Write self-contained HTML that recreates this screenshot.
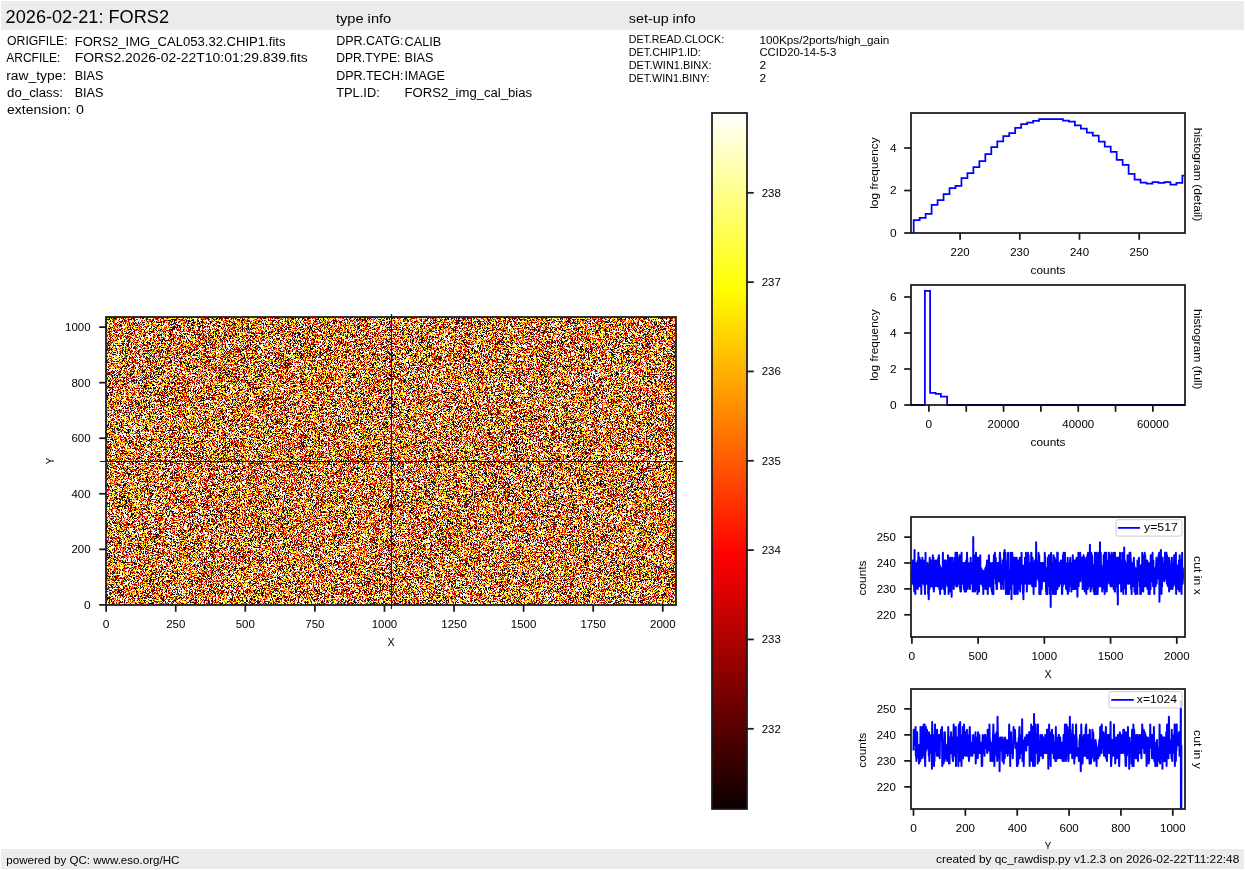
<!DOCTYPE html>
<html><head><meta charset="utf-8"><title>FORS2 raw display</title>
<style>
html,body{margin:0;padding:0;background:#ffffff;}
body{width:1245px;height:870px;position:relative;overflow:hidden;font-family:"Liberation Sans",sans-serif;}
#img{position:absolute;left:106px;top:317px;width:570px;height:288px;background:rgb(199,129,70);image-rendering:pixelated;}
svg text{font-family:"Liberation Sans",sans-serif;}
</style></head><body>
<canvas id="img" width="570" height="288"></canvas>
<svg width="1245" height="870" viewBox="0 0 1245 870" style="position:absolute;left:0;top:0">
<defs><linearGradient id="hot" x1="0" y1="1" x2="0" y2="0"><stop offset="0" stop-color="rgb(11,0,0)"/><stop offset="0.365079" stop-color="rgb(255,0,0)"/><stop offset="0.746032" stop-color="rgb(255,255,0)"/><stop offset="1" stop-color="rgb(255,255,255)"/></linearGradient><clipPath id="cx"><rect x="911" y="517" width="274" height="120"/></clipPath><clipPath id="cy"><rect x="911" y="689" width="274" height="120"/></clipPath><clipPath id="hd"><rect x="911" y="113" width="274" height="120"/></clipPath></defs>
<rect x="1" y="1" width="1243" height="29" fill="#ebebeb"/>
<text x="5.60" y="23.00" font-size="17.50" text-anchor="start" textLength="163.45" lengthAdjust="spacingAndGlyphs" fill="#000000">2026-02-21: FORS2</text>
<text x="335.90" y="22.70" font-size="13.12" text-anchor="start" textLength="55.34" lengthAdjust="spacingAndGlyphs" fill="#000000">type info</text>
<text x="628.80" y="22.70" font-size="13.12" text-anchor="start" textLength="66.89" lengthAdjust="spacingAndGlyphs" fill="#000000">set-up info</text>
<text x="7.10" y="44.90" font-size="13.12" text-anchor="start" textLength="60.49" lengthAdjust="spacingAndGlyphs" fill="#000000">ORIGFILE:</text>
<text x="74.70" y="45.90" font-size="13.12" text-anchor="start" textLength="210.78" lengthAdjust="spacingAndGlyphs" fill="#000000">FORS2_IMG_CAL053.32.CHIP1.fits</text>
<text x="6.20" y="61.90" font-size="13.12" text-anchor="start" textLength="54.08" lengthAdjust="spacingAndGlyphs" fill="#000000">ARCFILE:</text>
<text x="74.70" y="61.90" font-size="13.12" text-anchor="start" textLength="233.10" lengthAdjust="spacingAndGlyphs" fill="#000000">FORS2.2026-02-22T10:01:29.839.fits</text>
<text x="6.20" y="79.90" font-size="13.12" text-anchor="start" textLength="60.06" lengthAdjust="spacingAndGlyphs" fill="#000000">raw_type:</text>
<text x="74.70" y="79.90" font-size="13.12" text-anchor="start" textLength="28.75" lengthAdjust="spacingAndGlyphs" fill="#000000">BIAS</text>
<text x="7.10" y="97.00" font-size="13.12" text-anchor="start" textLength="55.82" lengthAdjust="spacingAndGlyphs" fill="#000000">do_class:</text>
<text x="74.70" y="97.00" font-size="13.12" text-anchor="start" textLength="28.75" lengthAdjust="spacingAndGlyphs" fill="#000000">BIAS</text>
<text x="7.10" y="113.70" font-size="13.12" text-anchor="start" textLength="63.72" lengthAdjust="spacingAndGlyphs" fill="#000000">extension:</text>
<text x="75.90" y="113.70" font-size="13.12" text-anchor="start" textLength="7.95" lengthAdjust="spacingAndGlyphs" fill="#000000">0</text>
<text x="336.15" y="44.90" font-size="13.12" text-anchor="start" textLength="67.22" lengthAdjust="spacingAndGlyphs" fill="#000000">DPR.CATG:</text>
<text x="404.60" y="45.90" font-size="13.12" text-anchor="start" textLength="36.50" lengthAdjust="spacingAndGlyphs" fill="#000000">CALIB</text>
<text x="336.15" y="61.90" font-size="13.12" text-anchor="start" textLength="64.30" lengthAdjust="spacingAndGlyphs" fill="#000000">DPR.TYPE:</text>
<text x="404.60" y="61.90" font-size="13.12" text-anchor="start" textLength="28.75" lengthAdjust="spacingAndGlyphs" fill="#000000">BIAS</text>
<text x="336.15" y="79.90" font-size="13.12" text-anchor="start" textLength="67.25" lengthAdjust="spacingAndGlyphs" fill="#000000">DPR.TECH:</text>
<text x="404.60" y="79.90" font-size="13.12" text-anchor="start" textLength="40.39" lengthAdjust="spacingAndGlyphs" fill="#000000">IMAGE</text>
<text x="336.15" y="97.00" font-size="13.12" text-anchor="start" textLength="43.63" lengthAdjust="spacingAndGlyphs" fill="#000000">TPL.ID:</text>
<text x="404.60" y="97.00" font-size="13.12" text-anchor="start" textLength="127.52" lengthAdjust="spacingAndGlyphs" fill="#000000">FORS2_img_cal_bias</text>
<text x="628.70" y="43.20" font-size="10.94" text-anchor="start" textLength="95.43" lengthAdjust="spacingAndGlyphs" fill="#000000">DET.READ.CLOCK:</text>
<text x="759.45" y="44.10" font-size="10.94" text-anchor="start" textLength="129.84" lengthAdjust="spacingAndGlyphs" fill="#000000">100Kps/2ports/high_gain</text>
<text x="628.70" y="55.80" font-size="10.94" text-anchor="start" textLength="72.19" lengthAdjust="spacingAndGlyphs" fill="#000000">DET.CHIP1.ID:</text>
<text x="759.45" y="55.80" font-size="10.94" text-anchor="start" textLength="76.83" lengthAdjust="spacingAndGlyphs" fill="#000000">CCID20-14-5-3</text>
<text x="628.70" y="68.70" font-size="10.94" text-anchor="start" textLength="82.96" lengthAdjust="spacingAndGlyphs" fill="#000000">DET.WIN1.BINX:</text>
<text x="759.45" y="68.70" font-size="10.94" text-anchor="start" textLength="6.64" lengthAdjust="spacingAndGlyphs" fill="#000000">2</text>
<text x="628.70" y="81.60" font-size="10.94" text-anchor="start" textLength="80.80" lengthAdjust="spacingAndGlyphs" fill="#000000">DET.WIN1.BINY:</text>
<text x="759.45" y="81.60" font-size="10.94" text-anchor="start" textLength="6.64" lengthAdjust="spacingAndGlyphs" fill="#000000">2</text>
<line x1="391.50" y1="314.00" x2="391.50" y2="609.00" stroke="#0000ff" stroke-width="1.15" stroke-linecap="butt"/>
<line x1="100.00" y1="461.50" x2="683.00" y2="461.50" stroke="#0000ff" stroke-width="1.15" stroke-linecap="butt"/>
<rect x="106.00" y="317.00" width="570.00" height="288.00" fill="none" stroke="#1a1a1a" stroke-width="1.75" stroke-linejoin="miter"/>
<line x1="106.14" y1="605.00" x2="106.14" y2="611.80" stroke="#1a1a1a" stroke-width="1.75" stroke-linecap="butt"/>
<text x="106.14" y="627.70" font-size="10.94" text-anchor="middle" textLength="6.64" lengthAdjust="spacingAndGlyphs" fill="#000000">0</text>
<line x1="175.72" y1="605.00" x2="175.72" y2="611.80" stroke="#1a1a1a" stroke-width="1.75" stroke-linecap="butt"/>
<text x="175.72" y="627.70" font-size="10.94" text-anchor="middle" textLength="19.12" lengthAdjust="spacingAndGlyphs" fill="#000000">250</text>
<line x1="245.30" y1="605.00" x2="245.30" y2="611.80" stroke="#1a1a1a" stroke-width="1.75" stroke-linecap="butt"/>
<text x="245.30" y="627.70" font-size="10.94" text-anchor="middle" textLength="19.12" lengthAdjust="spacingAndGlyphs" fill="#000000">500</text>
<line x1="314.88" y1="605.00" x2="314.88" y2="611.80" stroke="#1a1a1a" stroke-width="1.75" stroke-linecap="butt"/>
<text x="314.88" y="627.70" font-size="10.94" text-anchor="middle" textLength="19.12" lengthAdjust="spacingAndGlyphs" fill="#000000">750</text>
<line x1="384.46" y1="605.00" x2="384.46" y2="611.80" stroke="#1a1a1a" stroke-width="1.75" stroke-linecap="butt"/>
<text x="384.46" y="627.70" font-size="10.94" text-anchor="middle" textLength="25.50" lengthAdjust="spacingAndGlyphs" fill="#000000">1000</text>
<line x1="454.04" y1="605.00" x2="454.04" y2="611.80" stroke="#1a1a1a" stroke-width="1.75" stroke-linecap="butt"/>
<text x="454.04" y="627.70" font-size="10.94" text-anchor="middle" textLength="25.50" lengthAdjust="spacingAndGlyphs" fill="#000000">1250</text>
<line x1="523.62" y1="605.00" x2="523.62" y2="611.80" stroke="#1a1a1a" stroke-width="1.75" stroke-linecap="butt"/>
<text x="523.62" y="627.70" font-size="10.94" text-anchor="middle" textLength="25.50" lengthAdjust="spacingAndGlyphs" fill="#000000">1500</text>
<line x1="593.20" y1="605.00" x2="593.20" y2="611.80" stroke="#1a1a1a" stroke-width="1.75" stroke-linecap="butt"/>
<text x="593.20" y="627.70" font-size="10.94" text-anchor="middle" textLength="25.50" lengthAdjust="spacingAndGlyphs" fill="#000000">1750</text>
<line x1="662.78" y1="605.00" x2="662.78" y2="611.80" stroke="#1a1a1a" stroke-width="1.75" stroke-linecap="butt"/>
<text x="662.78" y="627.70" font-size="10.94" text-anchor="middle" textLength="25.50" lengthAdjust="spacingAndGlyphs" fill="#000000">2000</text>
<line x1="99.20" y1="604.90" x2="106.00" y2="604.90" stroke="#1a1a1a" stroke-width="1.75" stroke-linecap="butt"/>
<text x="90.60" y="608.80" font-size="10.94" text-anchor="end" textLength="6.64" lengthAdjust="spacingAndGlyphs" fill="#000000">0</text>
<line x1="99.20" y1="549.34" x2="106.00" y2="549.34" stroke="#1a1a1a" stroke-width="1.75" stroke-linecap="butt"/>
<text x="90.60" y="553.24" font-size="10.94" text-anchor="end" textLength="19.12" lengthAdjust="spacingAndGlyphs" fill="#000000">200</text>
<line x1="99.20" y1="493.78" x2="106.00" y2="493.78" stroke="#1a1a1a" stroke-width="1.75" stroke-linecap="butt"/>
<text x="90.60" y="497.68" font-size="10.94" text-anchor="end" textLength="19.12" lengthAdjust="spacingAndGlyphs" fill="#000000">400</text>
<line x1="99.20" y1="438.22" x2="106.00" y2="438.22" stroke="#1a1a1a" stroke-width="1.75" stroke-linecap="butt"/>
<text x="90.60" y="442.12" font-size="10.94" text-anchor="end" textLength="19.12" lengthAdjust="spacingAndGlyphs" fill="#000000">600</text>
<line x1="99.20" y1="382.66" x2="106.00" y2="382.66" stroke="#1a1a1a" stroke-width="1.75" stroke-linecap="butt"/>
<text x="90.60" y="386.56" font-size="10.94" text-anchor="end" textLength="19.12" lengthAdjust="spacingAndGlyphs" fill="#000000">800</text>
<line x1="99.20" y1="327.10" x2="106.00" y2="327.10" stroke="#1a1a1a" stroke-width="1.75" stroke-linecap="butt"/>
<text x="90.60" y="331.00" font-size="10.94" text-anchor="end" textLength="25.50" lengthAdjust="spacingAndGlyphs" fill="#000000">1000</text>
<text x="391.00" y="645.70" font-size="10.94" text-anchor="middle" textLength="7.15" lengthAdjust="spacingAndGlyphs" fill="#000000">X</text>
<text x="54.00" y="461.00" font-size="10.94" text-anchor="middle" textLength="6.38" lengthAdjust="spacingAndGlyphs" fill="#000000" transform="rotate(-90 54.00 461.00)">Y</text>
<rect x="712" y="113" width="35" height="696" fill="url(#hot)"/>
<rect x="712.00" y="113.00" width="35.00" height="696.00" fill="none" stroke="#1a1a1a" stroke-width="1.75" stroke-linejoin="miter"/>
<line x1="747.00" y1="192.80" x2="753.80" y2="192.80" stroke="#1a1a1a" stroke-width="1.75" stroke-linecap="butt"/>
<text x="761.75" y="196.70" font-size="10.94" text-anchor="start" textLength="19.12" lengthAdjust="spacingAndGlyphs" fill="#000000">238</text>
<line x1="747.00" y1="282.13" x2="753.80" y2="282.13" stroke="#1a1a1a" stroke-width="1.75" stroke-linecap="butt"/>
<text x="761.75" y="286.03" font-size="10.94" text-anchor="start" textLength="19.12" lengthAdjust="spacingAndGlyphs" fill="#000000">237</text>
<line x1="747.00" y1="371.46" x2="753.80" y2="371.46" stroke="#1a1a1a" stroke-width="1.75" stroke-linecap="butt"/>
<text x="761.75" y="375.36" font-size="10.94" text-anchor="start" textLength="19.12" lengthAdjust="spacingAndGlyphs" fill="#000000">236</text>
<line x1="747.00" y1="460.79" x2="753.80" y2="460.79" stroke="#1a1a1a" stroke-width="1.75" stroke-linecap="butt"/>
<text x="761.75" y="464.69" font-size="10.94" text-anchor="start" textLength="19.12" lengthAdjust="spacingAndGlyphs" fill="#000000">235</text>
<line x1="747.00" y1="550.12" x2="753.80" y2="550.12" stroke="#1a1a1a" stroke-width="1.75" stroke-linecap="butt"/>
<text x="761.75" y="554.02" font-size="10.94" text-anchor="start" textLength="19.12" lengthAdjust="spacingAndGlyphs" fill="#000000">234</text>
<line x1="747.00" y1="639.45" x2="753.80" y2="639.45" stroke="#1a1a1a" stroke-width="1.75" stroke-linecap="butt"/>
<text x="761.75" y="643.35" font-size="10.94" text-anchor="start" textLength="19.12" lengthAdjust="spacingAndGlyphs" fill="#000000">233</text>
<line x1="747.00" y1="728.78" x2="753.80" y2="728.78" stroke="#1a1a1a" stroke-width="1.75" stroke-linecap="butt"/>
<text x="761.75" y="732.68" font-size="10.94" text-anchor="start" textLength="19.12" lengthAdjust="spacingAndGlyphs" fill="#000000">232</text>
<polyline clip-path="url(#hd)" points="913.70,233.00 913.70,220.10 919.67,220.10 919.67,217.90 925.64,217.90 925.64,213.90 931.61,213.90 931.61,204.90 937.58,204.90 937.58,200.10 943.55,200.10 943.55,194.10 949.52,194.10 949.52,188.00 955.49,188.00 955.49,185.90 961.46,185.90 961.46,178.00 967.43,178.00 967.43,173.10 973.40,173.10 973.40,167.10 979.37,167.10 979.37,161.10 985.34,161.10 985.34,154.10 991.31,154.10 991.31,147.10 997.28,147.10 997.28,141.40 1003.25,141.40 1003.25,136.20 1009.22,136.20 1009.22,133.20 1015.19,133.20 1015.19,127.90 1021.16,127.90 1021.16,124.20 1027.13,124.20 1027.13,122.70 1033.10,122.70 1033.10,120.80 1039.07,120.80 1039.07,119.00 1045.04,119.00 1045.04,119.00 1051.01,119.00 1051.01,119.00 1056.98,119.00 1056.98,119.00 1062.95,119.00 1062.95,120.50 1068.92,120.50 1068.92,121.70 1074.89,121.70 1074.89,125.40 1080.86,125.40 1080.86,128.70 1086.83,128.70 1086.83,132.70 1092.80,132.70 1092.80,135.70 1098.77,135.70 1098.77,141.70 1104.74,141.70 1104.74,146.60 1110.71,146.60 1110.71,151.80 1116.68,151.80 1116.68,159.80 1122.65,159.80 1122.65,164.80 1128.62,164.80 1128.62,173.80 1134.59,173.80 1134.59,179.50 1140.56,179.50 1140.56,182.50 1146.53,182.50 1146.53,183.70 1152.50,183.70 1152.50,182.00 1158.47,182.00 1158.47,182.80 1164.44,182.80 1164.44,182.00 1170.41,182.00 1170.41,184.70 1176.38,184.70 1176.38,182.80 1182.35,182.80 1182.35,175.70 1188.32,175.70" fill="none" stroke="#0000ff" stroke-width="1.75" stroke-linejoin="miter"/>
<rect x="911.00" y="113.00" width="274.00" height="120.00" fill="none" stroke="#1a1a1a" stroke-width="1.75" stroke-linejoin="miter"/>
<line x1="960.10" y1="233.00" x2="960.10" y2="239.80" stroke="#1a1a1a" stroke-width="1.75" stroke-linecap="butt"/>
<text x="960.10" y="255.70" font-size="10.94" text-anchor="middle" textLength="19.12" lengthAdjust="spacingAndGlyphs" fill="#000000">220</text>
<line x1="1019.80" y1="233.00" x2="1019.80" y2="239.80" stroke="#1a1a1a" stroke-width="1.75" stroke-linecap="butt"/>
<text x="1019.80" y="255.70" font-size="10.94" text-anchor="middle" textLength="19.12" lengthAdjust="spacingAndGlyphs" fill="#000000">230</text>
<line x1="1079.50" y1="233.00" x2="1079.50" y2="239.80" stroke="#1a1a1a" stroke-width="1.75" stroke-linecap="butt"/>
<text x="1079.50" y="255.70" font-size="10.94" text-anchor="middle" textLength="19.12" lengthAdjust="spacingAndGlyphs" fill="#000000">240</text>
<line x1="1139.20" y1="233.00" x2="1139.20" y2="239.80" stroke="#1a1a1a" stroke-width="1.75" stroke-linecap="butt"/>
<text x="1139.20" y="255.70" font-size="10.94" text-anchor="middle" textLength="19.12" lengthAdjust="spacingAndGlyphs" fill="#000000">250</text>
<line x1="904.20" y1="233.00" x2="911.00" y2="233.00" stroke="#1a1a1a" stroke-width="1.75" stroke-linecap="butt"/>
<text x="896.70" y="236.90" font-size="10.94" text-anchor="end" textLength="6.64" lengthAdjust="spacingAndGlyphs" fill="#000000">0</text>
<line x1="904.20" y1="190.50" x2="911.00" y2="190.50" stroke="#1a1a1a" stroke-width="1.75" stroke-linecap="butt"/>
<text x="896.70" y="194.40" font-size="10.94" text-anchor="end" textLength="6.64" lengthAdjust="spacingAndGlyphs" fill="#000000">2</text>
<line x1="904.20" y1="148.00" x2="911.00" y2="148.00" stroke="#1a1a1a" stroke-width="1.75" stroke-linecap="butt"/>
<text x="896.70" y="151.90" font-size="10.94" text-anchor="end" textLength="6.64" lengthAdjust="spacingAndGlyphs" fill="#000000">4</text>
<text x="1048.00" y="273.70" font-size="10.94" text-anchor="middle" textLength="34.88" lengthAdjust="spacingAndGlyphs" fill="#000000">counts</text>
<text x="878.00" y="173.00" font-size="10.94" text-anchor="middle" textLength="71.58" lengthAdjust="spacingAndGlyphs" fill="#000000" transform="rotate(-90 878.00 173.00)">log frequency</text>
<text x="1194.00" y="174.50" font-size="10.94" text-anchor="middle" textLength="93.71" lengthAdjust="spacingAndGlyphs" fill="#000000" transform="rotate(90 1194.00 174.50)">histogram (detail)</text>
<polyline points="924.90,405.00 924.90,290.80 930.10,290.80 930.10,392.80 935.60,392.80 935.60,393.90 940.90,393.90 940.90,396.60 947.10,396.60 947.10,405.00 1185.00,405.00" fill="none" stroke="#0000ff" stroke-width="1.75"/>
<rect x="911.00" y="285.00" width="274.00" height="120.00" fill="none" stroke="#1a1a1a" stroke-width="1.75" stroke-linejoin="miter"/>
<line x1="911.00" y1="405.00" x2="924.90" y2="405.00" stroke="#00003a" stroke-width="1.75" stroke-linecap="butt"/>
<line x1="947.10" y1="405.00" x2="1185.00" y2="405.00" stroke="#00003a" stroke-width="1.75" stroke-linecap="butt"/>
<line x1="928.90" y1="405.00" x2="928.90" y2="411.80" stroke="#1a1a1a" stroke-width="1.75" stroke-linecap="butt"/>
<text x="928.90" y="427.70" font-size="10.94" text-anchor="middle" textLength="6.64" lengthAdjust="spacingAndGlyphs" fill="#000000">0</text>
<line x1="966.23" y1="405.00" x2="966.23" y2="411.80" stroke="#1a1a1a" stroke-width="1.75" stroke-linecap="butt"/>
<line x1="1003.56" y1="405.00" x2="1003.56" y2="411.80" stroke="#1a1a1a" stroke-width="1.75" stroke-linecap="butt"/>
<text x="1003.56" y="427.70" font-size="10.94" text-anchor="middle" textLength="31.88" lengthAdjust="spacingAndGlyphs" fill="#000000">20000</text>
<line x1="1040.89" y1="405.00" x2="1040.89" y2="411.80" stroke="#1a1a1a" stroke-width="1.75" stroke-linecap="butt"/>
<line x1="1078.22" y1="405.00" x2="1078.22" y2="411.80" stroke="#1a1a1a" stroke-width="1.75" stroke-linecap="butt"/>
<text x="1078.22" y="427.70" font-size="10.94" text-anchor="middle" textLength="31.88" lengthAdjust="spacingAndGlyphs" fill="#000000">40000</text>
<line x1="1115.55" y1="405.00" x2="1115.55" y2="411.80" stroke="#1a1a1a" stroke-width="1.75" stroke-linecap="butt"/>
<line x1="1152.88" y1="405.00" x2="1152.88" y2="411.80" stroke="#1a1a1a" stroke-width="1.75" stroke-linecap="butt"/>
<text x="1152.88" y="427.70" font-size="10.94" text-anchor="middle" textLength="31.88" lengthAdjust="spacingAndGlyphs" fill="#000000">60000</text>
<line x1="904.20" y1="405.00" x2="911.00" y2="405.00" stroke="#1a1a1a" stroke-width="1.75" stroke-linecap="butt"/>
<text x="896.70" y="408.90" font-size="10.94" text-anchor="end" textLength="6.64" lengthAdjust="spacingAndGlyphs" fill="#000000">0</text>
<line x1="904.20" y1="369.00" x2="911.00" y2="369.00" stroke="#1a1a1a" stroke-width="1.75" stroke-linecap="butt"/>
<text x="896.70" y="372.90" font-size="10.94" text-anchor="end" textLength="6.64" lengthAdjust="spacingAndGlyphs" fill="#000000">2</text>
<line x1="904.20" y1="333.00" x2="911.00" y2="333.00" stroke="#1a1a1a" stroke-width="1.75" stroke-linecap="butt"/>
<text x="896.70" y="336.90" font-size="10.94" text-anchor="end" textLength="6.64" lengthAdjust="spacingAndGlyphs" fill="#000000">4</text>
<line x1="904.20" y1="297.00" x2="911.00" y2="297.00" stroke="#1a1a1a" stroke-width="1.75" stroke-linecap="butt"/>
<text x="896.70" y="300.90" font-size="10.94" text-anchor="end" textLength="6.64" lengthAdjust="spacingAndGlyphs" fill="#000000">6</text>
<text x="1048.00" y="445.70" font-size="10.94" text-anchor="middle" textLength="34.88" lengthAdjust="spacingAndGlyphs" fill="#000000">counts</text>
<text x="878.00" y="345.00" font-size="10.94" text-anchor="middle" textLength="71.58" lengthAdjust="spacingAndGlyphs" fill="#000000" transform="rotate(-90 878.00 345.00)">log frequency</text>
<text x="1194.00" y="349.20" font-size="10.94" text-anchor="middle" textLength="80.46" lengthAdjust="spacingAndGlyphs" fill="#000000" transform="rotate(90 1194.00 349.20)">histogram (full)</text>
<polyline clip-path="url(#cx)" points="911.90,573.36 912.03,570.77 912.16,575.95 912.30,581.13 912.43,578.54 912.56,583.72 912.69,573.36 912.83,560.41 912.96,578.54 913.09,578.54 913.22,568.18 913.36,570.77 913.49,570.77 913.62,583.72 913.75,573.36 913.89,565.59 914.02,586.31 914.15,578.54 914.28,591.49 914.42,586.31 914.55,550.05 914.68,575.95 914.81,586.31 914.95,570.77 915.08,570.77 915.21,575.95 915.34,594.08 915.48,578.54 915.61,573.36 915.74,570.77 915.87,588.90 916.01,578.54 916.14,583.72 916.27,581.13 916.40,563.00 916.54,581.13 916.67,573.36 916.80,563.00 916.93,578.54 917.07,573.36 917.20,570.77 917.33,573.36 917.46,586.31 917.60,573.36 917.73,560.41 917.86,588.90 917.99,565.59 918.13,570.77 918.26,578.54 918.39,552.64 918.52,565.59 918.65,586.31 918.79,573.36 918.92,568.18 919.05,575.95 919.18,565.59 919.32,573.36 919.45,565.59 919.58,557.82 919.71,581.13 919.85,570.77 919.98,578.54 920.11,570.77 920.24,586.31 920.38,578.54 920.51,575.95 920.64,563.00 920.77,560.41 920.91,586.31 921.04,581.13 921.17,565.59 921.30,594.08 921.44,578.54 921.57,573.36 921.70,560.41 921.83,565.59 921.97,575.95 922.10,575.95 922.23,575.95 922.36,557.82 922.50,578.54 922.63,575.95 922.76,570.77 922.89,573.36 923.03,575.95 923.16,583.72 923.29,573.36 923.42,578.54 923.56,560.41 923.69,565.59 923.82,573.36 923.95,565.59 924.09,575.95 924.22,563.00 924.35,573.36 924.48,568.18 924.62,586.31 924.75,570.77 924.88,588.90 925.01,594.08 925.14,575.95 925.28,581.13 925.41,570.77 925.54,552.64 925.67,581.13 925.81,578.54 925.94,570.77 926.07,568.18 926.20,575.95 926.34,575.95 926.47,565.59 926.60,568.18 926.73,583.72 926.87,573.36 927.00,573.36 927.13,583.72 927.26,570.77 927.40,581.13 927.53,563.00 927.66,570.77 927.79,573.36 927.93,578.54 928.06,573.36 928.19,594.08 928.32,583.72 928.46,568.18 928.59,594.08 928.72,599.26 928.85,591.49 928.99,565.59 929.12,581.13 929.25,565.59 929.38,570.77 929.52,588.90 929.65,560.41 929.78,557.82 929.91,573.36 930.05,575.95 930.18,575.95 930.31,583.72 930.44,563.00 930.58,578.54 930.71,573.36 930.84,581.13 930.97,578.54 931.11,586.31 931.24,560.41 931.37,575.95 931.50,563.00 931.64,573.36 931.77,581.13 931.90,575.95 932.03,578.54 932.16,573.36 932.30,575.95 932.43,575.95 932.56,586.31 932.69,581.13 932.83,555.23 932.96,581.13 933.09,583.72 933.22,570.77 933.36,557.82 933.49,588.90 933.62,575.95 933.75,578.54 933.89,591.49 934.02,565.59 934.15,573.36 934.28,573.36 934.42,581.13 934.55,568.18 934.68,578.54 934.81,573.36 934.95,583.72 935.08,586.31 935.21,560.41 935.34,578.54 935.48,570.77 935.61,573.36 935.74,578.54 935.87,578.54 936.01,565.59 936.14,575.95 936.27,573.36 936.40,573.36 936.54,560.41 936.67,565.59 936.80,568.18 936.93,578.54 937.07,586.31 937.20,563.00 937.33,563.00 937.46,573.36 937.60,568.18 937.73,565.59 937.86,565.59 937.99,563.00 938.13,578.54 938.26,557.82 938.39,586.31 938.52,565.59 938.65,568.18 938.79,563.00 938.92,555.23 939.05,557.82 939.18,583.72 939.32,588.90 939.45,565.59 939.58,583.72 939.71,573.36 939.85,565.59 939.98,588.90 940.11,594.08 940.24,570.77 940.38,573.36 940.51,575.95 940.64,573.36 940.77,581.13 940.91,588.90 941.04,575.95 941.17,583.72 941.30,588.90 941.44,568.18 941.57,573.36 941.70,568.18 941.83,583.72 941.97,578.54 942.10,583.72 942.23,581.13 942.36,570.77 942.50,581.13 942.63,570.77 942.76,570.77 942.89,552.64 943.03,586.31 943.16,563.00 943.29,573.36 943.42,573.36 943.56,588.90 943.69,578.54 943.82,565.59 943.95,573.36 944.09,573.36 944.22,575.95 944.35,560.41 944.48,573.36 944.62,594.08 944.75,581.13 944.88,594.08 945.01,594.08 945.14,578.54 945.28,560.41 945.41,573.36 945.54,583.72 945.67,583.72 945.81,560.41 945.94,570.77 946.07,573.36 946.20,573.36 946.34,573.36 946.47,565.59 946.60,568.18 946.73,570.77 946.87,583.72 947.00,568.18 947.13,581.13 947.26,563.00 947.40,586.31 947.53,573.36 947.66,573.36 947.79,586.31 947.93,555.23 948.06,557.82 948.19,578.54 948.32,565.59 948.46,568.18 948.59,594.08 948.72,570.77 948.85,573.36 948.99,573.36 949.12,583.72 949.25,575.95 949.38,575.95 949.52,560.41 949.65,570.77 949.78,573.36 949.91,557.82 950.05,578.54 950.18,575.95 950.31,591.49 950.44,557.82 950.58,563.00 950.71,563.00 950.84,565.59 950.97,570.77 951.11,570.77 951.24,575.95 951.37,575.95 951.50,573.36 951.63,596.67 951.77,568.18 951.90,573.36 952.03,578.54 952.16,578.54 952.30,557.82 952.43,568.18 952.56,573.36 952.69,575.95 952.83,583.72 952.96,573.36 953.09,563.00 953.22,575.95 953.36,575.95 953.49,575.95 953.62,570.77 953.75,588.90 953.89,575.95 954.02,581.13 954.15,563.00 954.28,581.13 954.42,568.18 954.55,557.82 954.68,575.95 954.81,578.54 954.95,570.77 955.08,573.36 955.21,583.72 955.34,568.18 955.48,552.64 955.61,575.95 955.74,575.95 955.87,583.72 956.01,570.77 956.14,586.31 956.27,583.72 956.40,560.41 956.54,581.13 956.67,563.00 956.80,557.82 956.93,570.77 957.07,568.18 957.20,552.64 957.33,575.95 957.46,578.54 957.60,586.31 957.73,573.36 957.86,557.82 957.99,563.00 958.13,583.72 958.26,581.13 958.39,578.54 958.52,570.77 958.65,575.95 958.79,570.77 958.92,570.77 959.05,575.95 959.18,573.36 959.32,570.77 959.45,573.36 959.58,568.18 959.71,555.23 959.85,568.18 959.98,573.36 960.11,588.90 960.24,568.18 960.38,591.49 960.51,586.31 960.64,565.59 960.77,565.59 960.91,573.36 961.04,591.49 961.17,575.95 961.30,581.13 961.44,565.59 961.57,552.64 961.70,570.77 961.83,581.13 961.97,583.72 962.10,573.36 962.23,575.95 962.36,583.72 962.50,570.77 962.63,583.72 962.76,563.00 962.89,563.00 963.03,563.00 963.16,578.54 963.29,568.18 963.42,573.36 963.56,575.95 963.69,575.95 963.82,586.31 963.95,588.90 964.09,565.59 964.22,575.95 964.35,570.77 964.48,563.00 964.62,591.49 964.75,581.13 964.88,570.77 965.01,568.18 965.14,575.95 965.28,563.00 965.41,570.77 965.54,586.31 965.67,583.72 965.81,565.59 965.94,568.18 966.07,591.49 966.20,560.41 966.34,568.18 966.47,560.41 966.60,575.95 966.73,575.95 966.87,583.72 967.00,552.64 967.13,575.95 967.26,557.82 967.40,578.54 967.53,570.77 967.66,588.90 967.79,575.95 967.93,563.00 968.06,586.31 968.19,563.00 968.32,570.77 968.46,583.72 968.59,578.54 968.72,578.54 968.85,573.36 968.99,578.54 969.12,581.13 969.25,575.95 969.38,583.72 969.52,586.31 969.65,573.36 969.78,563.00 969.91,588.90 970.05,573.36 970.18,578.54 970.31,583.72 970.44,565.59 970.58,578.54 970.71,557.82 970.84,581.13 970.97,568.18 971.11,575.95 971.24,581.13 971.37,568.18 971.50,575.95 971.63,568.18 971.77,573.36 971.90,583.72 972.03,573.36 972.16,573.36 972.30,563.00 972.43,581.13 972.56,573.36 972.69,591.49 972.83,565.59 972.96,583.72 973.09,591.49 973.22,537.10 973.36,563.00 973.49,588.90 973.62,583.72 973.75,581.13 973.89,583.72 974.02,568.18 974.15,581.13 974.28,581.13 974.42,568.18 974.55,581.13 974.68,568.18 974.81,583.72 974.95,586.31 975.08,591.49 975.21,555.23 975.34,575.95 975.48,570.77 975.61,573.36 975.74,570.77 975.87,573.36 976.01,552.64 976.14,583.72 976.27,588.90 976.40,583.72 976.54,586.31 976.67,565.59 976.80,565.59 976.93,583.72 977.07,586.31 977.20,575.95 977.33,557.82 977.46,594.08 977.60,568.18 977.73,583.72 977.86,563.00 977.99,583.72 978.12,575.95 978.26,588.90 978.39,583.72 978.52,557.82 978.65,565.59 978.79,575.95 978.92,581.13 979.05,591.49 979.18,575.95 979.32,573.36 979.45,573.36 979.58,573.36 979.71,583.72 979.85,573.36 979.98,573.36 980.11,560.41 980.24,555.23 980.38,573.36 980.51,581.13 980.64,573.36 980.77,578.54 980.91,581.13 981.04,573.36 981.17,583.72 981.30,568.18 981.44,573.36 981.57,570.77 981.70,575.95 981.83,581.13 981.97,583.72 982.10,575.95 982.23,578.54 982.36,570.77 982.50,573.36 982.63,586.31 982.76,573.36 982.89,586.31 983.03,578.54 983.16,575.95 983.29,594.08 983.42,573.36 983.56,570.77 983.69,575.95 983.82,578.54 983.95,575.95 984.09,583.72 984.22,575.95 984.35,578.54 984.48,573.36 984.62,586.31 984.75,570.77 984.88,570.77 985.01,573.36 985.14,578.54 985.28,568.18 985.41,588.90 985.54,568.18 985.67,570.77 985.81,570.77 985.94,568.18 986.07,578.54 986.20,575.95 986.34,565.59 986.47,568.18 986.60,570.77 986.73,588.90 986.87,568.18 987.00,560.41 987.13,563.00 987.26,570.77 987.40,588.90 987.53,563.00 987.66,573.36 987.79,594.08 987.93,568.18 988.06,588.90 988.19,586.31 988.32,578.54 988.46,560.41 988.59,575.95 988.72,570.77 988.85,555.23 988.99,557.82 989.12,573.36 989.25,575.95 989.38,586.31 989.52,581.13 989.65,568.18 989.78,568.18 989.91,570.77 990.05,563.00 990.18,581.13 990.31,573.36 990.44,565.59 990.58,568.18 990.71,563.00 990.84,568.18 990.97,575.95 991.11,568.18 991.24,583.72 991.37,588.90 991.50,568.18 991.63,573.36 991.77,570.77 991.90,591.49 992.03,575.95 992.16,578.54 992.30,581.13 992.43,594.08 992.56,575.95 992.69,563.00 992.83,568.18 992.96,578.54 993.09,573.36 993.22,565.59 993.36,594.08 993.49,573.36 993.62,568.18 993.75,565.59 993.89,555.23 994.02,560.41 994.15,570.77 994.28,570.77 994.42,565.59 994.55,578.54 994.68,573.36 994.81,563.00 994.95,552.64 995.08,575.95 995.21,573.36 995.34,570.77 995.48,560.41 995.61,573.36 995.74,557.82 995.87,583.72 996.01,575.95 996.14,575.95 996.27,565.59 996.40,563.00 996.54,588.90 996.67,581.13 996.80,570.77 996.93,578.54 997.07,588.90 997.20,563.00 997.33,568.18 997.46,568.18 997.60,578.54 997.73,563.00 997.86,575.95 997.99,563.00 998.12,581.13 998.26,581.13 998.39,570.77 998.52,581.13 998.65,565.59 998.79,570.77 998.92,581.13 999.05,573.36 999.18,575.95 999.32,563.00 999.45,578.54 999.58,578.54 999.71,560.41 999.85,552.64 999.98,552.64 1000.11,573.36 1000.24,570.77 1000.38,557.82 1000.51,573.36 1000.64,583.72 1000.77,570.77 1000.91,568.18 1001.04,581.13 1001.17,588.90 1001.30,588.90 1001.44,565.59 1001.57,581.13 1001.70,573.36 1001.83,570.77 1001.97,565.59 1002.10,575.95 1002.23,568.18 1002.36,581.13 1002.50,575.95 1002.63,583.72 1002.76,560.41 1002.89,573.36 1003.03,581.13 1003.16,575.95 1003.29,575.95 1003.42,565.59 1003.56,588.90 1003.69,583.72 1003.82,575.95 1003.95,552.64 1004.09,563.00 1004.22,573.36 1004.35,565.59 1004.48,552.64 1004.62,550.05 1004.75,575.95 1004.88,560.41 1005.01,568.18 1005.14,565.59 1005.28,578.54 1005.41,552.64 1005.54,555.23 1005.67,568.18 1005.81,565.59 1005.94,594.08 1006.07,565.59 1006.20,575.95 1006.34,568.18 1006.47,565.59 1006.60,575.95 1006.73,588.90 1006.87,568.18 1007.00,581.13 1007.13,575.95 1007.26,578.54 1007.40,575.95 1007.53,594.08 1007.66,560.41 1007.79,570.77 1007.93,563.00 1008.06,552.64 1008.19,573.36 1008.32,591.49 1008.46,581.13 1008.59,586.31 1008.72,578.54 1008.85,573.36 1008.99,594.08 1009.12,570.77 1009.25,588.90 1009.38,570.77 1009.52,573.36 1009.65,575.95 1009.78,573.36 1009.91,578.54 1010.05,578.54 1010.18,588.90 1010.31,573.36 1010.44,555.23 1010.58,552.64 1010.71,560.41 1010.84,565.59 1010.97,581.13 1011.11,557.82 1011.24,573.36 1011.37,573.36 1011.50,599.26 1011.63,573.36 1011.77,578.54 1011.90,573.36 1012.03,583.72 1012.16,575.95 1012.30,552.64 1012.43,573.36 1012.56,575.95 1012.69,568.18 1012.83,565.59 1012.96,583.72 1013.09,575.95 1013.22,563.00 1013.36,570.77 1013.49,570.77 1013.62,557.82 1013.75,581.13 1013.89,573.36 1014.02,578.54 1014.15,557.82 1014.28,594.08 1014.42,581.13 1014.55,578.54 1014.68,565.59 1014.81,568.18 1014.95,557.82 1015.08,588.90 1015.21,565.59 1015.34,575.95 1015.48,578.54 1015.61,568.18 1015.74,581.13 1015.87,594.08 1016.01,575.95 1016.14,588.90 1016.27,578.54 1016.40,568.18 1016.54,570.77 1016.67,557.82 1016.80,575.95 1016.93,588.90 1017.07,581.13 1017.20,581.13 1017.33,586.31 1017.46,568.18 1017.60,578.54 1017.73,594.08 1017.86,565.59 1017.99,573.36 1018.12,570.77 1018.26,570.77 1018.39,565.59 1018.52,573.36 1018.65,560.41 1018.79,568.18 1018.92,568.18 1019.05,568.18 1019.18,588.90 1019.32,575.95 1019.45,575.95 1019.58,570.77 1019.71,586.31 1019.85,557.82 1019.98,570.77 1020.11,586.31 1020.24,591.49 1020.38,575.95 1020.51,573.36 1020.64,581.13 1020.77,573.36 1020.91,578.54 1021.04,568.18 1021.17,581.13 1021.30,573.36 1021.44,563.00 1021.57,552.64 1021.70,583.72 1021.83,578.54 1021.97,581.13 1022.10,565.59 1022.23,583.72 1022.36,578.54 1022.50,573.36 1022.63,583.72 1022.76,583.72 1022.89,578.54 1023.03,594.08 1023.16,588.90 1023.29,578.54 1023.42,599.26 1023.56,575.95 1023.69,591.49 1023.82,578.54 1023.95,565.59 1024.09,568.18 1024.22,573.36 1024.35,581.13 1024.48,565.59 1024.61,578.54 1024.75,583.72 1024.88,581.13 1025.01,557.82 1025.14,570.77 1025.28,560.41 1025.41,578.54 1025.54,563.00 1025.67,578.54 1025.81,575.95 1025.94,552.64 1026.07,565.59 1026.20,578.54 1026.34,573.36 1026.47,570.77 1026.60,560.41 1026.73,578.54 1026.87,591.49 1027.00,575.95 1027.13,573.36 1027.26,570.77 1027.40,560.41 1027.53,570.77 1027.66,565.59 1027.79,583.72 1027.93,565.59 1028.06,552.64 1028.19,565.59 1028.32,570.77 1028.46,570.77 1028.59,555.23 1028.72,583.72 1028.85,573.36 1028.99,568.18 1029.12,565.59 1029.25,578.54 1029.38,570.77 1029.52,575.95 1029.65,570.77 1029.78,573.36 1029.91,583.72 1030.05,573.36 1030.18,563.00 1030.31,583.72 1030.44,575.95 1030.58,565.59 1030.71,583.72 1030.84,570.77 1030.97,583.72 1031.11,560.41 1031.24,552.64 1031.37,552.64 1031.50,575.95 1031.63,565.59 1031.77,570.77 1031.90,573.36 1032.03,557.82 1032.16,586.31 1032.30,563.00 1032.43,573.36 1032.56,557.82 1032.69,570.77 1032.83,581.13 1032.96,570.77 1033.09,565.59 1033.22,573.36 1033.36,568.18 1033.49,578.54 1033.62,594.08 1033.75,563.00 1033.89,565.59 1034.02,570.77 1034.15,573.36 1034.28,563.00 1034.42,578.54 1034.55,581.13 1034.68,575.95 1034.81,560.41 1034.95,586.31 1035.08,560.41 1035.21,578.54 1035.34,583.72 1035.48,560.41 1035.61,573.36 1035.74,586.31 1035.87,575.95 1036.01,563.00 1036.14,542.28 1036.27,578.54 1036.40,568.18 1036.54,565.59 1036.67,578.54 1036.80,570.77 1036.93,573.36 1037.07,578.54 1037.20,578.54 1037.33,573.36 1037.46,573.36 1037.60,578.54 1037.73,578.54 1037.86,563.00 1037.99,570.77 1038.12,563.00 1038.26,560.41 1038.39,568.18 1038.52,552.64 1038.65,581.13 1038.79,565.59 1038.92,575.95 1039.05,555.23 1039.18,555.23 1039.32,594.08 1039.45,583.72 1039.58,565.59 1039.71,565.59 1039.85,565.59 1039.98,573.36 1040.11,568.18 1040.24,565.59 1040.38,573.36 1040.51,563.00 1040.64,594.08 1040.77,565.59 1040.91,583.72 1041.04,563.00 1041.17,575.95 1041.30,581.13 1041.44,568.18 1041.57,581.13 1041.70,581.13 1041.83,588.90 1041.97,573.36 1042.10,568.18 1042.23,563.00 1042.36,573.36 1042.50,563.00 1042.63,573.36 1042.76,573.36 1042.89,568.18 1043.03,563.00 1043.16,575.95 1043.29,575.95 1043.42,575.95 1043.56,573.36 1043.69,581.13 1043.82,563.00 1043.95,575.95 1044.09,568.18 1044.22,581.13 1044.35,570.77 1044.48,568.18 1044.61,578.54 1044.75,552.64 1044.88,568.18 1045.01,555.23 1045.14,563.00 1045.28,578.54 1045.41,575.95 1045.54,568.18 1045.67,573.36 1045.81,573.36 1045.94,575.95 1046.07,591.49 1046.20,575.95 1046.34,594.08 1046.47,568.18 1046.60,581.13 1046.73,581.13 1046.87,575.95 1047.00,570.77 1047.13,586.31 1047.26,591.49 1047.40,583.72 1047.53,594.08 1047.66,583.72 1047.79,557.82 1047.93,583.72 1048.06,565.59 1048.19,586.31 1048.32,570.77 1048.46,575.95 1048.59,573.36 1048.72,568.18 1048.85,555.23 1048.99,570.77 1049.12,570.77 1049.25,583.72 1049.38,568.18 1049.52,575.95 1049.65,565.59 1049.78,573.36 1049.91,555.23 1050.05,594.08 1050.18,575.95 1050.31,563.00 1050.44,575.95 1050.58,581.13 1050.71,607.03 1050.84,586.31 1050.97,570.77 1051.10,552.64 1051.24,560.41 1051.37,583.72 1051.50,581.13 1051.63,575.95 1051.77,563.00 1051.90,581.13 1052.03,581.13 1052.16,563.00 1052.30,565.59 1052.43,575.95 1052.56,583.72 1052.69,588.90 1052.83,581.13 1052.96,594.08 1053.09,565.59 1053.22,578.54 1053.36,568.18 1053.49,555.23 1053.62,560.41 1053.75,583.72 1053.89,565.59 1054.02,560.41 1054.15,581.13 1054.28,583.72 1054.42,573.36 1054.55,588.90 1054.68,557.82 1054.81,594.08 1054.95,583.72 1055.08,575.95 1055.21,575.95 1055.34,570.77 1055.48,570.77 1055.61,575.95 1055.74,560.41 1055.87,594.08 1056.01,573.36 1056.14,581.13 1056.27,570.77 1056.40,570.77 1056.54,581.13 1056.67,578.54 1056.80,565.59 1056.93,570.77 1057.07,581.13 1057.20,552.64 1057.33,552.64 1057.46,588.90 1057.60,570.77 1057.73,552.64 1057.86,565.59 1057.99,570.77 1058.12,575.95 1058.26,578.54 1058.39,575.95 1058.52,578.54 1058.65,565.59 1058.79,575.95 1058.92,578.54 1059.05,586.31 1059.18,573.36 1059.32,581.13 1059.45,575.95 1059.58,563.00 1059.71,568.18 1059.85,568.18 1059.98,570.77 1060.11,573.36 1060.24,573.36 1060.38,575.95 1060.51,565.59 1060.64,583.72 1060.77,560.41 1060.91,573.36 1061.04,581.13 1061.17,578.54 1061.30,581.13 1061.44,570.77 1061.57,581.13 1061.70,560.41 1061.83,581.13 1061.97,594.08 1062.10,581.13 1062.23,594.08 1062.36,573.36 1062.50,563.00 1062.63,565.59 1062.76,586.31 1062.89,581.13 1063.03,555.23 1063.16,570.77 1063.29,573.36 1063.42,563.00 1063.56,552.64 1063.69,560.41 1063.82,570.77 1063.95,570.77 1064.09,565.59 1064.22,578.54 1064.35,583.72 1064.48,573.36 1064.61,583.72 1064.75,573.36 1064.88,573.36 1065.01,552.64 1065.14,581.13 1065.28,573.36 1065.41,575.95 1065.54,568.18 1065.67,563.00 1065.81,578.54 1065.94,581.13 1066.07,588.90 1066.20,583.72 1066.34,568.18 1066.47,573.36 1066.60,583.72 1066.73,575.95 1066.87,573.36 1067.00,568.18 1067.13,578.54 1067.26,575.95 1067.40,591.49 1067.53,583.72 1067.66,557.82 1067.79,594.08 1067.93,575.95 1068.06,570.77 1068.19,575.95 1068.32,581.13 1068.46,573.36 1068.59,573.36 1068.72,573.36 1068.85,591.49 1068.99,573.36 1069.12,581.13 1069.25,578.54 1069.38,570.77 1069.52,565.59 1069.65,563.00 1069.78,578.54 1069.91,563.00 1070.05,560.41 1070.18,560.41 1070.31,557.82 1070.44,573.36 1070.58,575.95 1070.71,565.59 1070.84,586.31 1070.97,570.77 1071.10,578.54 1071.24,575.95 1071.37,591.49 1071.50,581.13 1071.63,573.36 1071.77,563.00 1071.90,563.00 1072.03,573.36 1072.16,575.95 1072.30,581.13 1072.43,568.18 1072.56,575.95 1072.69,568.18 1072.83,555.23 1072.96,573.36 1073.09,588.90 1073.22,581.13 1073.36,588.90 1073.49,586.31 1073.62,560.41 1073.75,570.77 1073.89,588.90 1074.02,565.59 1074.15,560.41 1074.28,575.95 1074.42,581.13 1074.55,575.95 1074.68,570.77 1074.81,565.59 1074.95,560.41 1075.08,560.41 1075.21,560.41 1075.34,560.41 1075.48,565.59 1075.61,588.90 1075.74,573.36 1075.87,570.77 1076.01,575.95 1076.14,563.00 1076.27,575.95 1076.40,583.72 1076.54,557.82 1076.67,565.59 1076.80,570.77 1076.93,563.00 1077.07,563.00 1077.20,570.77 1077.33,594.08 1077.46,596.67 1077.59,578.54 1077.73,583.72 1077.86,570.77 1077.99,560.41 1078.12,578.54 1078.26,583.72 1078.39,552.64 1078.52,578.54 1078.65,586.31 1078.79,570.77 1078.92,568.18 1079.05,581.13 1079.18,565.59 1079.32,578.54 1079.45,581.13 1079.58,570.77 1079.71,565.59 1079.85,578.54 1079.98,570.77 1080.11,573.36 1080.24,552.64 1080.38,581.13 1080.51,560.41 1080.64,573.36 1080.77,573.36 1080.91,565.59 1081.04,563.00 1081.17,560.41 1081.30,570.77 1081.44,578.54 1081.57,578.54 1081.70,568.18 1081.83,568.18 1081.97,557.82 1082.10,568.18 1082.23,563.00 1082.36,557.82 1082.50,570.77 1082.63,588.90 1082.76,583.72 1082.89,588.90 1083.03,557.82 1083.16,581.13 1083.29,560.41 1083.42,568.18 1083.56,555.23 1083.69,563.00 1083.82,573.36 1083.95,575.95 1084.09,573.36 1084.22,570.77 1084.35,578.54 1084.48,573.36 1084.61,557.82 1084.75,591.49 1084.88,570.77 1085.01,581.13 1085.14,570.77 1085.28,565.59 1085.41,573.36 1085.54,565.59 1085.67,588.90 1085.81,563.00 1085.94,578.54 1086.07,565.59 1086.20,570.77 1086.34,594.08 1086.47,581.13 1086.60,570.77 1086.73,557.82 1086.87,570.77 1087.00,570.77 1087.13,586.31 1087.26,557.82 1087.40,555.23 1087.53,573.36 1087.66,575.95 1087.79,588.90 1087.93,563.00 1088.06,552.64 1088.19,565.59 1088.32,560.41 1088.46,568.18 1088.59,583.72 1088.72,560.41 1088.85,586.31 1088.99,575.95 1089.12,570.77 1089.25,563.00 1089.38,568.18 1089.52,568.18 1089.65,581.13 1089.78,586.31 1089.91,544.87 1090.05,581.13 1090.18,586.31 1090.31,586.31 1090.44,578.54 1090.58,591.49 1090.71,586.31 1090.84,588.90 1090.97,570.77 1091.10,568.18 1091.24,552.64 1091.37,588.90 1091.50,581.13 1091.63,563.00 1091.77,575.95 1091.90,575.95 1092.03,555.23 1092.16,575.95 1092.30,583.72 1092.43,586.31 1092.56,570.77 1092.69,570.77 1092.83,586.31 1092.96,583.72 1093.09,568.18 1093.22,568.18 1093.36,578.54 1093.49,565.59 1093.62,568.18 1093.75,591.49 1093.89,575.95 1094.02,568.18 1094.15,578.54 1094.28,594.08 1094.42,575.95 1094.55,565.59 1094.68,557.82 1094.81,594.08 1094.95,552.64 1095.08,583.72 1095.21,563.00 1095.34,560.41 1095.48,563.00 1095.61,570.77 1095.74,583.72 1095.87,565.59 1096.01,581.13 1096.14,594.08 1096.27,552.64 1096.40,565.59 1096.54,555.23 1096.67,581.13 1096.80,557.82 1096.93,557.82 1097.07,557.82 1097.20,573.36 1097.33,586.31 1097.46,575.95 1097.59,594.08 1097.73,591.49 1097.86,573.36 1097.99,583.72 1098.12,575.95 1098.26,573.36 1098.39,552.64 1098.52,560.41 1098.65,573.36 1098.79,560.41 1098.92,581.13 1099.05,575.95 1099.18,563.00 1099.32,586.31 1099.45,575.95 1099.58,586.31 1099.71,570.77 1099.85,557.82 1099.98,542.28 1100.11,570.77 1100.24,581.13 1100.38,583.72 1100.51,586.31 1100.64,557.82 1100.77,552.64 1100.91,568.18 1101.04,581.13 1101.17,565.59 1101.30,575.95 1101.44,565.59 1101.57,570.77 1101.70,570.77 1101.83,568.18 1101.97,578.54 1102.10,575.95 1102.23,591.49 1102.36,578.54 1102.50,586.31 1102.63,573.36 1102.76,583.72 1102.89,573.36 1103.03,568.18 1103.16,586.31 1103.29,581.13 1103.42,583.72 1103.56,565.59 1103.69,555.23 1103.82,565.59 1103.95,575.95 1104.08,557.82 1104.22,588.90 1104.35,557.82 1104.48,578.54 1104.61,594.08 1104.75,552.64 1104.88,557.82 1105.01,583.72 1105.14,570.77 1105.28,575.95 1105.41,573.36 1105.54,588.90 1105.67,581.13 1105.81,568.18 1105.94,570.77 1106.07,560.41 1106.20,573.36 1106.34,552.64 1106.47,581.13 1106.60,570.77 1106.73,591.49 1106.87,586.31 1107.00,560.41 1107.13,583.72 1107.26,568.18 1107.40,573.36 1107.53,583.72 1107.66,575.95 1107.79,578.54 1107.93,578.54 1108.06,565.59 1108.19,565.59 1108.32,578.54 1108.46,581.13 1108.59,570.77 1108.72,573.36 1108.85,563.00 1108.99,552.64 1109.12,565.59 1109.25,573.36 1109.38,575.95 1109.52,581.13 1109.65,581.13 1109.78,583.72 1109.91,575.95 1110.05,578.54 1110.18,565.59 1110.31,575.95 1110.44,575.95 1110.58,586.31 1110.71,555.23 1110.84,568.18 1110.97,555.23 1111.10,565.59 1111.24,557.82 1111.37,575.95 1111.50,565.59 1111.63,552.64 1111.77,586.31 1111.90,560.41 1112.03,555.23 1112.16,568.18 1112.30,565.59 1112.43,560.41 1112.56,581.13 1112.69,568.18 1112.83,581.13 1112.96,581.13 1113.09,578.54 1113.22,573.36 1113.36,570.77 1113.49,568.18 1113.62,588.90 1113.75,552.64 1113.89,560.41 1114.02,565.59 1114.15,575.95 1114.28,573.36 1114.42,568.18 1114.55,568.18 1114.68,591.49 1114.81,565.59 1114.95,552.64 1115.08,591.49 1115.21,563.00 1115.34,568.18 1115.48,573.36 1115.61,557.82 1115.74,586.31 1115.87,570.77 1116.01,557.82 1116.14,575.95 1116.27,578.54 1116.40,570.77 1116.54,578.54 1116.67,557.82 1116.80,583.72 1116.93,563.00 1117.07,586.31 1117.20,565.59 1117.33,573.36 1117.46,594.08 1117.59,573.36 1117.73,583.72 1117.86,604.44 1117.99,557.82 1118.12,583.72 1118.26,583.72 1118.39,557.82 1118.52,570.77 1118.65,557.82 1118.79,570.77 1118.92,581.13 1119.05,573.36 1119.18,560.41 1119.32,563.00 1119.45,573.36 1119.58,573.36 1119.71,573.36 1119.85,578.54 1119.98,552.64 1120.11,573.36 1120.24,583.72 1120.38,578.54 1120.51,565.59 1120.64,565.59 1120.77,573.36 1120.91,581.13 1121.04,573.36 1121.17,591.49 1121.30,586.31 1121.44,565.59 1121.57,578.54 1121.70,568.18 1121.83,560.41 1121.97,565.59 1122.10,573.36 1122.23,552.64 1122.36,565.59 1122.50,575.95 1122.63,565.59 1122.76,568.18 1122.89,581.13 1123.03,573.36 1123.16,575.95 1123.29,594.08 1123.42,575.95 1123.56,575.95 1123.69,578.54 1123.82,588.90 1123.95,575.95 1124.08,573.36 1124.22,547.46 1124.35,583.72 1124.48,565.59 1124.61,586.31 1124.75,575.95 1124.88,560.41 1125.01,581.13 1125.14,578.54 1125.28,563.00 1125.41,575.95 1125.54,575.95 1125.67,570.77 1125.81,563.00 1125.94,594.08 1126.07,581.13 1126.20,583.72 1126.34,583.72 1126.47,581.13 1126.60,581.13 1126.73,570.77 1126.87,581.13 1127.00,570.77 1127.13,568.18 1127.26,581.13 1127.40,570.77 1127.53,555.23 1127.66,570.77 1127.79,578.54 1127.93,573.36 1128.06,583.72 1128.19,570.77 1128.32,563.00 1128.46,581.13 1128.59,575.95 1128.72,560.41 1128.85,578.54 1128.99,570.77 1129.12,583.72 1129.25,581.13 1129.38,578.54 1129.52,552.64 1129.65,575.95 1129.78,578.54 1129.91,578.54 1130.05,575.95 1130.18,565.59 1130.31,570.77 1130.44,552.64 1130.57,570.77 1130.71,557.82 1130.84,570.77 1130.97,568.18 1131.10,588.90 1131.24,573.36 1131.37,573.36 1131.50,575.95 1131.63,594.08 1131.77,563.00 1131.90,575.95 1132.03,578.54 1132.16,575.95 1132.30,575.95 1132.43,568.18 1132.56,586.31 1132.69,583.72 1132.83,570.77 1132.96,570.77 1133.09,575.95 1133.22,578.54 1133.36,581.13 1133.49,573.36 1133.62,560.41 1133.75,583.72 1133.89,557.82 1134.02,565.59 1134.15,578.54 1134.28,565.59 1134.42,588.90 1134.55,591.49 1134.68,586.31 1134.81,575.95 1134.95,575.95 1135.08,578.54 1135.21,573.36 1135.34,594.08 1135.48,568.18 1135.61,586.31 1135.74,578.54 1135.87,578.54 1136.01,583.72 1136.14,586.31 1136.27,583.72 1136.40,573.36 1136.54,568.18 1136.67,568.18 1136.80,583.72 1136.93,581.13 1137.07,581.13 1137.20,568.18 1137.33,594.08 1137.46,560.41 1137.59,578.54 1137.73,581.13 1137.86,570.77 1137.99,563.00 1138.12,570.77 1138.26,563.00 1138.39,570.77 1138.52,560.41 1138.65,560.41 1138.79,573.36 1138.92,557.82 1139.05,570.77 1139.18,573.36 1139.32,581.13 1139.45,575.95 1139.58,565.59 1139.71,586.31 1139.85,565.59 1139.98,570.77 1140.11,570.77 1140.24,594.08 1140.38,573.36 1140.51,565.59 1140.64,581.13 1140.77,573.36 1140.91,594.08 1141.04,565.59 1141.17,578.54 1141.30,565.59 1141.44,591.49 1141.57,565.59 1141.70,575.95 1141.83,565.59 1141.97,583.72 1142.10,578.54 1142.23,552.64 1142.36,581.13 1142.50,581.13 1142.63,575.95 1142.76,583.72 1142.89,560.41 1143.03,555.23 1143.16,581.13 1143.29,591.49 1143.42,560.41 1143.56,563.00 1143.69,565.59 1143.82,560.41 1143.95,581.13 1144.08,575.95 1144.22,586.31 1144.35,586.31 1144.48,563.00 1144.61,581.13 1144.75,552.64 1144.88,573.36 1145.01,578.54 1145.14,565.59 1145.28,555.23 1145.41,568.18 1145.54,586.31 1145.67,568.18 1145.81,560.41 1145.94,578.54 1146.07,581.13 1146.20,563.00 1146.34,570.77 1146.47,583.72 1146.60,575.95 1146.73,581.13 1146.87,570.77 1147.00,570.77 1147.13,560.41 1147.26,565.59 1147.40,588.90 1147.53,568.18 1147.66,563.00 1147.79,568.18 1147.93,563.00 1148.06,578.54 1148.19,583.72 1148.32,563.00 1148.46,583.72 1148.59,594.08 1148.72,563.00 1148.85,581.13 1148.99,575.95 1149.12,586.31 1149.25,586.31 1149.38,583.72 1149.52,575.95 1149.65,568.18 1149.78,594.08 1149.91,565.59 1150.05,586.31 1150.18,583.72 1150.31,565.59 1150.44,573.36 1150.57,588.90 1150.71,555.23 1150.84,581.13 1150.97,570.77 1151.10,570.77 1151.24,557.82 1151.37,578.54 1151.50,563.00 1151.63,581.13 1151.77,563.00 1151.90,581.13 1152.03,575.95 1152.16,555.23 1152.30,570.77 1152.43,570.77 1152.56,552.64 1152.69,568.18 1152.83,581.13 1152.96,565.59 1153.09,586.31 1153.22,560.41 1153.36,560.41 1153.49,578.54 1153.62,578.54 1153.75,570.77 1153.89,573.36 1154.02,583.72 1154.15,568.18 1154.28,594.08 1154.42,578.54 1154.55,575.95 1154.68,575.95 1154.81,570.77 1154.95,586.31 1155.08,568.18 1155.21,575.95 1155.34,578.54 1155.48,586.31 1155.61,586.31 1155.74,568.18 1155.87,583.72 1156.01,573.36 1156.14,563.00 1156.27,563.00 1156.40,557.82 1156.54,575.95 1156.67,583.72 1156.80,563.00 1156.93,570.77 1157.06,563.00 1157.20,573.36 1157.33,560.41 1157.46,565.59 1157.59,565.59 1157.73,568.18 1157.86,568.18 1157.99,570.77 1158.12,570.77 1158.26,563.00 1158.39,578.54 1158.52,555.23 1158.65,573.36 1158.79,563.00 1158.92,573.36 1159.05,575.95 1159.18,552.64 1159.32,575.95 1159.45,601.85 1159.58,581.13 1159.71,575.95 1159.85,552.64 1159.98,570.77 1160.11,563.00 1160.24,583.72 1160.38,570.77 1160.51,565.59 1160.64,555.23 1160.77,581.13 1160.91,550.05 1161.04,570.77 1161.17,583.72 1161.30,573.36 1161.44,575.95 1161.57,594.08 1161.70,568.18 1161.83,568.18 1161.97,578.54 1162.10,586.31 1162.23,557.82 1162.36,570.77 1162.50,563.00 1162.63,557.82 1162.76,578.54 1162.89,565.59 1163.03,575.95 1163.16,573.36 1163.29,573.36 1163.42,573.36 1163.56,563.00 1163.69,570.77 1163.82,573.36 1163.95,575.95 1164.08,570.77 1164.22,581.13 1164.35,578.54 1164.48,573.36 1164.61,578.54 1164.75,573.36 1164.88,578.54 1165.01,552.64 1165.14,560.41 1165.28,568.18 1165.41,573.36 1165.54,552.64 1165.67,570.77 1165.81,573.36 1165.94,570.77 1166.07,570.77 1166.20,557.82 1166.34,573.36 1166.47,552.64 1166.60,581.13 1166.73,565.59 1166.87,583.72 1167.00,555.23 1167.13,575.95 1167.26,573.36 1167.40,563.00 1167.53,560.41 1167.66,583.72 1167.79,575.95 1167.93,586.31 1168.06,570.77 1168.19,573.36 1168.32,575.95 1168.46,581.13 1168.59,575.95 1168.72,581.13 1168.85,568.18 1168.99,557.82 1169.12,591.49 1169.25,573.36 1169.38,578.54 1169.52,568.18 1169.65,583.72 1169.78,573.36 1169.91,583.72 1170.05,565.59 1170.18,573.36 1170.31,575.95 1170.44,568.18 1170.57,575.95 1170.71,588.90 1170.84,568.18 1170.97,570.77 1171.10,575.95 1171.24,563.00 1171.37,560.41 1171.50,583.72 1171.63,581.13 1171.77,557.82 1171.90,557.82 1172.03,581.13 1172.16,586.31 1172.30,578.54 1172.43,578.54 1172.56,588.90 1172.69,573.36 1172.83,586.31 1172.96,586.31 1173.09,563.00 1173.22,581.13 1173.36,573.36 1173.49,565.59 1173.62,565.59 1173.75,575.95 1173.89,573.36 1174.02,581.13 1174.15,555.23 1174.28,565.59 1174.42,583.72 1174.55,573.36 1174.68,565.59 1174.81,568.18 1174.95,555.23 1175.08,560.41 1175.21,578.54 1175.34,573.36 1175.48,586.31 1175.61,570.77 1175.74,570.77 1175.87,552.64 1176.01,573.36 1176.14,594.08 1176.27,581.13 1176.40,570.77 1176.54,586.31 1176.67,581.13 1176.80,575.95 1176.93,570.77 1177.06,575.95 1177.20,581.13 1177.33,565.59 1177.46,578.54 1177.59,578.54 1177.73,586.31 1177.86,581.13 1177.99,565.59 1178.12,588.90 1178.26,573.36 1178.39,565.59 1178.52,575.95 1178.65,570.77 1178.79,583.72 1178.92,560.41 1179.05,563.00 1179.18,570.77 1179.32,591.49 1179.45,583.72 1179.58,563.00 1179.71,555.23 1179.85,570.77 1179.98,560.41 1180.11,578.54 1180.24,575.95 1180.38,573.36 1180.51,568.18 1180.64,588.90 1180.77,563.00 1180.91,560.41 1181.04,583.72 1181.17,586.31 1181.30,570.77 1181.44,578.54 1181.57,594.08 1181.70,565.59 1181.83,570.77 1181.97,578.54 1182.10,552.64 1182.23,570.77 1182.36,581.13 1182.50,573.36 1182.63,583.72 1182.76,581.13 1182.89,568.18 1183.03,578.54" fill="none" stroke="#0000ff" stroke-width="2" stroke-linejoin="round"/>
<rect x="911.00" y="517.00" width="274.00" height="120.00" fill="none" stroke="#1a1a1a" stroke-width="1.75" stroke-linejoin="miter"/>
<line x1="911.90" y1="637.00" x2="911.90" y2="643.80" stroke="#1a1a1a" stroke-width="1.75" stroke-linecap="butt"/>
<text x="911.90" y="659.70" font-size="10.94" text-anchor="middle" textLength="6.64" lengthAdjust="spacingAndGlyphs" fill="#000000">0</text>
<line x1="978.12" y1="637.00" x2="978.12" y2="643.80" stroke="#1a1a1a" stroke-width="1.75" stroke-linecap="butt"/>
<text x="978.12" y="659.70" font-size="10.94" text-anchor="middle" textLength="19.12" lengthAdjust="spacingAndGlyphs" fill="#000000">500</text>
<line x1="1044.35" y1="637.00" x2="1044.35" y2="643.80" stroke="#1a1a1a" stroke-width="1.75" stroke-linecap="butt"/>
<text x="1044.35" y="659.70" font-size="10.94" text-anchor="middle" textLength="25.50" lengthAdjust="spacingAndGlyphs" fill="#000000">1000</text>
<line x1="1110.58" y1="637.00" x2="1110.58" y2="643.80" stroke="#1a1a1a" stroke-width="1.75" stroke-linecap="butt"/>
<text x="1110.58" y="659.70" font-size="10.94" text-anchor="middle" textLength="25.50" lengthAdjust="spacingAndGlyphs" fill="#000000">1500</text>
<line x1="1176.80" y1="637.00" x2="1176.80" y2="643.80" stroke="#1a1a1a" stroke-width="1.75" stroke-linecap="butt"/>
<text x="1176.80" y="659.70" font-size="10.94" text-anchor="middle" textLength="25.50" lengthAdjust="spacingAndGlyphs" fill="#000000">2000</text>
<line x1="904.20" y1="614.80" x2="911.00" y2="614.80" stroke="#1a1a1a" stroke-width="1.75" stroke-linecap="butt"/>
<text x="895.80" y="618.70" font-size="10.94" text-anchor="end" textLength="19.12" lengthAdjust="spacingAndGlyphs" fill="#000000">220</text>
<line x1="904.20" y1="588.90" x2="911.00" y2="588.90" stroke="#1a1a1a" stroke-width="1.75" stroke-linecap="butt"/>
<text x="895.80" y="592.80" font-size="10.94" text-anchor="end" textLength="19.12" lengthAdjust="spacingAndGlyphs" fill="#000000">230</text>
<line x1="904.20" y1="563.00" x2="911.00" y2="563.00" stroke="#1a1a1a" stroke-width="1.75" stroke-linecap="butt"/>
<text x="895.80" y="566.90" font-size="10.94" text-anchor="end" textLength="19.12" lengthAdjust="spacingAndGlyphs" fill="#000000">240</text>
<line x1="904.20" y1="537.10" x2="911.00" y2="537.10" stroke="#1a1a1a" stroke-width="1.75" stroke-linecap="butt"/>
<text x="895.80" y="541.00" font-size="10.94" text-anchor="end" textLength="19.12" lengthAdjust="spacingAndGlyphs" fill="#000000">250</text>
<text x="1048.00" y="677.70" font-size="10.94" text-anchor="middle" textLength="7.15" lengthAdjust="spacingAndGlyphs" fill="#000000">X</text>
<text x="866.00" y="578.00" font-size="10.94" text-anchor="middle" textLength="34.88" lengthAdjust="spacingAndGlyphs" fill="#000000" transform="rotate(-90 866.00 578.00)">counts</text>
<text x="1194.00" y="575.40" font-size="10.94" text-anchor="middle" textLength="38.77" lengthAdjust="spacingAndGlyphs" fill="#000000" transform="rotate(90 1194.00 575.40)">cut in x</text>
<rect x="1116.1" y="519.7" width="65.9" height="16.4" rx="2" ry="2" fill="#ffffff" fill-opacity="0.8" stroke="#cccccc" stroke-width="1"/>
<line x1="1118.00" y1="527.90" x2="1140.00" y2="527.90" stroke="#0000ff" stroke-width="1.75" stroke-linecap="butt"/>
<text x="1144.00" y="531.00" font-size="10.61" text-anchor="start" textLength="33.80" lengthAdjust="spacingAndGlyphs" fill="#000000">y=517</text>
<polyline clip-path="url(#cy)" points="913.50,750.50 913.76,729.70 914.02,737.50 914.28,737.50 914.54,740.10 914.80,740.10 915.06,732.30 915.32,745.30 915.57,727.10 915.83,755.70 916.09,747.90 916.35,760.90 916.61,750.50 916.87,740.10 917.13,732.30 917.39,753.10 917.65,745.30 917.91,750.50 918.17,753.10 918.43,758.30 918.69,745.30 918.95,763.50 919.20,745.30 919.46,745.30 919.72,753.10 919.98,755.70 920.24,760.90 920.50,727.10 920.76,758.30 921.02,729.70 921.28,740.10 921.54,750.50 921.80,758.30 922.06,734.90 922.32,727.10 922.58,755.70 922.83,747.90 923.09,734.90 923.35,742.70 923.61,724.50 923.87,750.50 924.13,740.10 924.39,758.30 924.65,724.50 924.91,753.10 925.17,766.10 925.43,747.90 925.69,747.90 925.95,727.10 926.21,750.50 926.47,745.30 926.72,740.10 926.98,729.70 927.24,745.30 927.50,734.90 927.76,740.10 928.02,747.90 928.28,745.30 928.54,745.30 928.80,755.70 929.06,732.30 929.32,760.90 929.58,734.90 929.84,734.90 930.10,747.90 930.35,753.10 930.61,747.90 930.87,740.10 931.13,737.50 931.39,742.70 931.65,734.90 931.91,768.70 932.17,721.90 932.43,760.90 932.69,737.50 932.95,745.30 933.21,750.50 933.47,734.90 933.73,740.10 933.98,766.10 934.24,745.30 934.50,760.90 934.76,734.90 935.02,724.50 935.28,750.50 935.54,745.30 935.80,747.90 936.06,742.70 936.32,740.10 936.58,732.30 936.84,755.70 937.10,729.70 937.36,755.70 937.61,742.70 937.87,734.90 938.13,737.50 938.39,755.70 938.65,753.10 938.91,750.50 939.17,745.30 939.43,734.90 939.69,758.30 939.95,740.10 940.21,740.10 940.47,740.10 940.73,740.10 940.99,729.70 941.25,740.10 941.50,737.50 941.76,740.10 942.02,727.10 942.28,766.10 942.54,732.30 942.80,747.90 943.06,747.90 943.32,755.70 943.58,763.50 943.84,750.50 944.10,753.10 944.36,740.10 944.62,760.90 944.88,732.30 945.13,742.70 945.39,747.90 945.65,753.10 945.91,753.10 946.17,758.30 946.43,750.50 946.69,745.30 946.95,747.90 947.21,760.90 947.47,747.90 947.73,755.70 947.99,745.30 948.25,727.10 948.51,740.10 948.76,747.90 949.02,763.50 949.28,760.90 949.54,763.50 949.80,737.50 950.06,753.10 950.32,745.30 950.58,753.10 950.84,745.30 951.10,732.30 951.36,753.10 951.62,750.50 951.88,753.10 952.14,737.50 952.39,755.70 952.65,758.30 952.91,760.90 953.17,760.90 953.43,740.10 953.69,724.50 953.95,755.70 954.21,734.90 954.47,742.70 954.73,755.70 954.99,747.90 955.25,747.90 955.51,753.10 955.77,727.10 956.03,766.10 956.28,742.70 956.54,742.70 956.80,750.50 957.06,745.30 957.32,737.50 957.58,745.30 957.84,742.70 958.10,737.50 958.36,766.10 958.62,729.70 958.88,724.50 959.14,734.90 959.40,734.90 959.66,760.90 959.91,747.90 960.17,721.90 960.43,750.50 960.69,734.90 960.95,753.10 961.21,747.90 961.47,766.10 961.73,747.90 961.99,745.30 962.25,753.10 962.51,753.10 962.77,727.10 963.03,758.30 963.29,755.70 963.54,753.10 963.80,734.90 964.06,724.50 964.32,742.70 964.58,753.10 964.84,750.50 965.10,734.90 965.36,755.70 965.62,732.30 965.88,732.30 966.14,745.30 966.40,740.10 966.66,737.50 966.92,729.70 967.18,755.70 967.43,734.90 967.69,750.50 967.95,753.10 968.21,745.30 968.47,747.90 968.73,755.70 968.99,760.90 969.25,755.70 969.51,732.30 969.77,727.10 970.03,740.10 970.29,734.90 970.55,750.50 970.81,747.90 971.06,742.70 971.32,755.70 971.58,755.70 971.84,745.30 972.10,747.90 972.36,755.70 972.62,742.70 972.88,747.90 973.14,734.90 973.40,745.30 973.66,747.90 973.92,745.30 974.18,747.90 974.44,753.10 974.69,750.50 974.95,737.50 975.21,740.10 975.47,732.30 975.73,763.50 975.99,750.50 976.25,750.50 976.51,745.30 976.77,750.50 977.03,750.50 977.29,737.50 977.55,745.30 977.81,758.30 978.07,732.30 978.33,734.90 978.58,750.50 978.84,737.50 979.10,753.10 979.36,734.90 979.62,747.90 979.88,753.10 980.14,750.50 980.40,753.10 980.66,742.70 980.92,745.30 981.18,745.30 981.44,750.50 981.70,766.10 981.96,745.30 982.21,766.10 982.47,742.70 982.73,734.90 982.99,742.70 983.25,750.50 983.51,747.90 983.77,747.90 984.03,750.50 984.29,750.50 984.55,755.70 984.81,734.90 985.07,745.30 985.33,734.90 985.59,747.90 985.84,745.30 986.10,747.90 986.36,740.10 986.62,737.50 986.88,742.70 987.14,753.10 987.40,753.10 987.66,729.70 987.92,747.90 988.18,747.90 988.44,729.70 988.70,734.90 988.96,740.10 989.22,750.50 989.47,724.50 989.73,742.70 989.99,740.10 990.25,747.90 990.51,760.90 990.77,758.30 991.03,742.70 991.29,742.70 991.55,747.90 991.81,758.30 992.07,760.90 992.33,747.90 992.59,760.90 992.85,737.50 993.11,734.90 993.36,724.50 993.62,737.50 993.88,753.10 994.14,755.70 994.40,766.10 994.66,753.10 994.92,747.90 995.18,734.90 995.44,740.10 995.70,740.10 995.96,742.70 996.22,740.10 996.48,732.30 996.74,755.70 996.99,750.50 997.25,760.90 997.51,716.70 997.77,732.30 998.03,737.50 998.29,758.30 998.55,745.30 998.81,747.90 999.07,745.30 999.33,747.90 999.59,771.30 999.85,750.50 1000.11,737.50 1000.37,742.70 1000.62,747.90 1000.88,747.90 1001.14,750.50 1001.40,737.50 1001.66,747.90 1001.92,742.70 1002.18,750.50 1002.44,760.90 1002.70,737.50 1002.96,755.70 1003.22,740.10 1003.48,742.70 1003.74,763.50 1004.00,755.70 1004.25,750.50 1004.51,753.10 1004.77,758.30 1005.03,737.50 1005.29,747.90 1005.55,742.70 1005.81,750.50 1006.07,742.70 1006.33,753.10 1006.59,745.30 1006.85,740.10 1007.11,745.30 1007.37,750.50 1007.63,755.70 1007.89,745.30 1008.14,742.70 1008.40,747.90 1008.66,753.10 1008.92,740.10 1009.18,724.50 1009.44,747.90 1009.70,742.70 1009.96,742.70 1010.22,766.10 1010.48,745.30 1010.74,753.10 1011.00,732.30 1011.26,747.90 1011.52,753.10 1011.77,747.90 1012.03,745.30 1012.29,750.50 1012.55,745.30 1012.81,758.30 1013.07,747.90 1013.33,737.50 1013.59,727.10 1013.85,737.50 1014.11,742.70 1014.37,734.90 1014.63,734.90 1014.89,729.70 1015.15,734.90 1015.40,747.90 1015.66,742.70 1015.92,745.30 1016.18,742.70 1016.44,742.70 1016.70,753.10 1016.96,766.10 1017.22,753.10 1017.48,766.10 1017.74,745.30 1018.00,745.30 1018.26,763.50 1018.52,740.10 1018.78,737.50 1019.04,745.30 1019.29,729.70 1019.55,727.10 1019.81,758.30 1020.07,734.90 1020.33,740.10 1020.59,742.70 1020.85,737.50 1021.11,753.10 1021.37,753.10 1021.63,753.10 1021.89,753.10 1022.15,719.30 1022.41,760.90 1022.67,755.70 1022.92,740.10 1023.18,745.30 1023.44,742.70 1023.70,766.10 1023.96,753.10 1024.22,750.50 1024.48,745.30 1024.74,750.50 1025.00,737.50 1025.26,745.30 1025.52,745.30 1025.78,745.30 1026.04,737.50 1026.30,750.50 1026.55,734.90 1026.81,740.10 1027.07,745.30 1027.33,745.30 1027.59,740.10 1027.85,734.90 1028.11,737.50 1028.37,742.70 1028.63,737.50 1028.89,745.30 1029.15,732.30 1029.41,745.30 1029.67,766.10 1029.93,732.30 1030.18,745.30 1030.44,758.30 1030.70,747.90 1030.96,755.70 1031.22,724.50 1031.48,740.10 1031.74,760.90 1032.00,740.10 1032.26,750.50 1032.52,727.10 1032.78,755.70 1033.04,766.10 1033.30,745.30 1033.56,750.50 1033.82,750.50 1034.07,714.10 1034.33,742.70 1034.59,729.70 1034.85,766.10 1035.11,734.90 1035.37,750.50 1035.63,724.50 1035.89,740.10 1036.15,747.90 1036.41,734.90 1036.67,740.10 1036.93,753.10 1037.19,737.50 1037.45,750.50 1037.70,763.50 1037.96,724.50 1038.22,750.50 1038.48,753.10 1038.74,742.70 1039.00,760.90 1039.26,758.30 1039.52,750.50 1039.78,750.50 1040.04,745.30 1040.30,734.90 1040.56,750.50 1040.82,740.10 1041.08,740.10 1041.33,755.70 1041.59,742.70 1041.85,755.70 1042.11,734.90 1042.37,740.10 1042.63,745.30 1042.89,758.30 1043.15,745.30 1043.41,753.10 1043.67,737.50 1043.93,747.90 1044.19,753.10 1044.45,737.50 1044.71,737.50 1044.97,753.10 1045.22,734.90 1045.48,747.90 1045.74,747.90 1046.00,745.30 1046.26,753.10 1046.52,750.50 1046.78,747.90 1047.04,729.70 1047.30,729.70 1047.56,747.90 1047.82,729.70 1048.08,745.30 1048.34,768.70 1048.60,737.50 1048.85,742.70 1049.11,724.50 1049.37,742.70 1049.63,758.30 1049.89,732.30 1050.15,750.50 1050.41,747.90 1050.67,766.10 1050.93,734.90 1051.19,737.50 1051.45,737.50 1051.71,734.90 1051.97,729.70 1052.23,745.30 1052.48,737.50 1052.74,753.10 1053.00,750.50 1053.26,734.90 1053.52,742.70 1053.78,758.30 1054.04,742.70 1054.30,747.90 1054.56,753.10 1054.82,742.70 1055.08,750.50 1055.34,760.90 1055.60,758.30 1055.86,727.10 1056.12,760.90 1056.37,742.70 1056.63,740.10 1056.89,740.10 1057.15,758.30 1057.41,747.90 1057.67,745.30 1057.93,737.50 1058.19,753.10 1058.45,758.30 1058.71,734.90 1058.97,734.90 1059.23,742.70 1059.49,753.10 1059.75,742.70 1060.00,745.30 1060.26,737.50 1060.52,758.30 1060.78,745.30 1061.04,747.90 1061.30,758.30 1061.56,742.70 1061.82,745.30 1062.08,750.50 1062.34,742.70 1062.60,760.90 1062.86,745.30 1063.12,742.70 1063.38,742.70 1063.63,734.90 1063.89,758.30 1064.15,760.90 1064.41,742.70 1064.67,740.10 1064.93,724.50 1065.19,740.10 1065.45,755.70 1065.71,737.50 1065.97,753.10 1066.23,760.90 1066.49,724.50 1066.75,742.70 1067.01,737.50 1067.26,740.10 1067.52,727.10 1067.78,742.70 1068.04,732.30 1068.30,755.70 1068.56,760.90 1068.82,732.30 1069.08,729.70 1069.34,740.10 1069.60,742.70 1069.86,716.70 1070.12,753.10 1070.38,729.70 1070.64,740.10 1070.90,740.10 1071.15,742.70 1071.41,734.90 1071.67,740.10 1071.93,737.50 1072.19,758.30 1072.45,740.10 1072.71,724.50 1072.97,750.50 1073.23,747.90 1073.49,737.50 1073.75,734.90 1074.01,740.10 1074.27,763.50 1074.53,740.10 1074.78,758.30 1075.04,753.10 1075.30,740.10 1075.56,747.90 1075.82,737.50 1076.08,724.50 1076.34,737.50 1076.60,737.50 1076.86,755.70 1077.12,753.10 1077.38,755.70 1077.64,750.50 1077.90,755.70 1078.16,753.10 1078.41,747.90 1078.67,755.70 1078.93,760.90 1079.19,760.90 1079.45,740.10 1079.71,745.30 1079.97,734.90 1080.23,734.90 1080.49,750.50 1080.75,771.30 1081.01,760.90 1081.27,724.50 1081.53,734.90 1081.79,747.90 1082.05,758.30 1082.30,742.70 1082.56,763.50 1082.82,753.10 1083.08,737.50 1083.34,745.30 1083.60,750.50 1083.86,734.90 1084.12,755.70 1084.38,742.70 1084.64,750.50 1084.90,755.70 1085.16,740.10 1085.42,755.70 1085.68,727.10 1085.93,750.50 1086.19,724.50 1086.45,755.70 1086.71,740.10 1086.97,758.30 1087.23,758.30 1087.49,745.30 1087.75,740.10 1088.01,758.30 1088.27,734.90 1088.53,753.10 1088.79,745.30 1089.05,742.70 1089.31,740.10 1089.56,763.50 1089.82,729.70 1090.08,740.10 1090.34,750.50 1090.60,755.70 1090.86,763.50 1091.12,760.90 1091.38,740.10 1091.64,750.50 1091.90,758.30 1092.16,750.50 1092.42,729.70 1092.68,747.90 1092.94,750.50 1093.19,732.30 1093.45,740.10 1093.71,745.30 1093.97,753.10 1094.23,760.90 1094.49,758.30 1094.75,750.50 1095.01,747.90 1095.27,742.70 1095.53,740.10 1095.79,742.70 1096.05,742.70 1096.31,755.70 1096.57,766.10 1096.83,750.50 1097.08,755.70 1097.34,753.10 1097.60,747.90 1097.86,758.30 1098.12,758.30 1098.38,747.90 1098.64,745.30 1098.90,753.10 1099.16,740.10 1099.42,747.90 1099.68,755.70 1099.94,745.30 1100.20,727.10 1100.46,753.10 1100.71,734.90 1100.97,732.30 1101.23,729.70 1101.49,753.10 1101.75,724.50 1102.01,745.30 1102.27,747.90 1102.53,747.90 1102.79,740.10 1103.05,745.30 1103.31,747.90 1103.57,732.30 1103.83,753.10 1104.09,755.70 1104.34,737.50 1104.60,737.50 1104.86,734.90 1105.12,755.70 1105.38,734.90 1105.64,740.10 1105.90,727.10 1106.16,758.30 1106.42,742.70 1106.68,747.90 1106.94,760.90 1107.20,753.10 1107.46,734.90 1107.72,750.50 1107.97,753.10 1108.23,737.50 1108.49,734.90 1108.75,734.90 1109.01,753.10 1109.27,745.30 1109.53,734.90 1109.79,753.10 1110.05,753.10 1110.31,737.50 1110.57,721.90 1110.83,758.30 1111.09,766.10 1111.35,760.90 1111.61,755.70 1111.86,747.90 1112.12,740.10 1112.38,747.90 1112.64,753.10 1112.90,745.30 1113.16,755.70 1113.42,745.30 1113.68,753.10 1113.94,724.50 1114.20,737.50 1114.46,753.10 1114.72,755.70 1114.98,750.50 1115.24,763.50 1115.49,753.10 1115.75,753.10 1116.01,737.50 1116.27,750.50 1116.53,753.10 1116.79,758.30 1117.05,758.30 1117.31,745.30 1117.57,747.90 1117.83,734.90 1118.09,753.10 1118.35,734.90 1118.61,742.70 1118.87,745.30 1119.12,766.10 1119.38,758.30 1119.64,737.50 1119.90,732.30 1120.16,742.70 1120.42,737.50 1120.68,750.50 1120.94,750.50 1121.20,753.10 1121.46,734.90 1121.72,742.70 1121.98,747.90 1122.24,747.90 1122.50,740.10 1122.76,742.70 1123.01,753.10 1123.27,729.70 1123.53,742.70 1123.79,745.30 1124.05,729.70 1124.31,734.90 1124.57,747.90 1124.83,740.10 1125.09,755.70 1125.35,753.10 1125.61,766.10 1125.87,732.30 1126.13,766.10 1126.39,740.10 1126.64,753.10 1126.90,755.70 1127.16,747.90 1127.42,742.70 1127.68,740.10 1127.94,727.10 1128.20,742.70 1128.46,737.50 1128.72,753.10 1128.98,737.50 1129.24,768.70 1129.50,750.50 1129.76,747.90 1130.02,745.30 1130.27,742.70 1130.53,742.70 1130.79,750.50 1131.05,753.10 1131.31,737.50 1131.57,763.50 1131.83,753.10 1132.09,729.70 1132.35,766.10 1132.61,753.10 1132.87,740.10 1133.13,763.50 1133.39,724.50 1133.65,766.10 1133.90,732.30 1134.16,729.70 1134.42,737.50 1134.68,747.90 1134.94,742.70 1135.20,755.70 1135.46,737.50 1135.72,758.30 1135.98,747.90 1136.24,734.90 1136.50,758.30 1136.76,750.50 1137.02,745.30 1137.28,758.30 1137.54,734.90 1137.79,742.70 1138.05,760.90 1138.31,745.30 1138.57,753.10 1138.83,753.10 1139.09,745.30 1139.35,753.10 1139.61,734.90 1139.87,753.10 1140.13,734.90 1140.39,745.30 1140.65,737.50 1140.91,750.50 1141.17,750.50 1141.42,758.30 1141.68,740.10 1141.94,737.50 1142.20,724.50 1142.46,732.30 1142.72,742.70 1142.98,747.90 1143.24,742.70 1143.50,745.30 1143.76,729.70 1144.02,737.50 1144.28,753.10 1144.54,753.10 1144.80,732.30 1145.05,742.70 1145.31,747.90 1145.57,734.90 1145.83,750.50 1146.09,747.90 1146.35,750.50 1146.61,766.10 1146.87,737.50 1147.13,758.30 1147.39,750.50 1147.65,753.10 1147.91,737.50 1148.17,745.30 1148.43,745.30 1148.69,763.50 1148.94,747.90 1149.20,760.90 1149.46,742.70 1149.72,742.70 1149.98,745.30 1150.24,724.50 1150.50,740.10 1150.76,740.10 1151.02,745.30 1151.28,747.90 1151.54,734.90 1151.80,734.90 1152.06,758.30 1152.32,734.90 1152.57,740.10 1152.83,734.90 1153.09,740.10 1153.35,758.30 1153.61,758.30 1153.87,727.10 1154.13,742.70 1154.39,760.90 1154.65,742.70 1154.91,750.50 1155.17,763.50 1155.43,766.10 1155.69,760.90 1155.95,742.70 1156.20,745.30 1156.46,747.90 1156.72,742.70 1156.98,740.10 1157.24,766.10 1157.50,747.90 1157.76,753.10 1158.02,758.30 1158.28,750.50 1158.54,747.90 1158.80,747.90 1159.06,760.90 1159.32,750.50 1159.58,724.50 1159.84,755.70 1160.09,763.50 1160.35,742.70 1160.61,740.10 1160.87,740.10 1161.13,758.30 1161.39,734.90 1161.65,753.10 1161.91,758.30 1162.17,753.10 1162.43,768.70 1162.69,737.50 1162.95,740.10 1163.21,745.30 1163.47,737.50 1163.72,745.30 1163.98,737.50 1164.24,760.90 1164.50,760.90 1164.76,737.50 1165.02,760.90 1165.28,747.90 1165.54,747.90 1165.80,750.50 1166.06,750.50 1166.32,732.30 1166.58,766.10 1166.84,737.50 1167.10,724.50 1167.35,745.30 1167.61,745.30 1167.87,737.50 1168.13,727.10 1168.39,758.30 1168.65,745.30 1168.91,716.70 1169.17,740.10 1169.43,745.30 1169.69,740.10 1169.95,750.50 1170.21,745.30 1170.47,753.10 1170.73,753.10 1170.98,747.90 1171.24,747.90 1171.50,758.30 1171.76,729.70 1172.02,747.90 1172.28,760.90 1172.54,734.90 1172.80,753.10 1173.06,740.10 1173.32,745.30 1173.58,742.70 1173.84,745.30 1174.10,750.50 1174.36,745.30 1174.62,724.50 1174.87,766.10 1175.13,745.30 1175.39,742.70 1175.65,755.70 1175.91,760.90 1176.17,724.50 1176.43,750.50 1176.69,724.50 1176.95,740.10 1177.21,745.30 1177.47,740.10 1177.73,740.10 1177.99,734.90 1178.25,742.70 1178.50,745.30 1178.76,745.30 1179.02,732.30 1179.28,737.50 1179.54,755.70 1179.80,753.10 1180.06,742.70 1180.32,753.10 1180.58,745.30 1180.84,701.10 1181.10,968.90 1181.36,745.30" fill="none" stroke="#0000ff" stroke-width="2" stroke-linejoin="round"/>
<rect x="911.00" y="689.00" width="274.00" height="120.00" fill="none" stroke="#1a1a1a" stroke-width="1.75" stroke-linejoin="miter"/>
<line x1="913.50" y1="809.00" x2="913.50" y2="815.80" stroke="#1a1a1a" stroke-width="1.75" stroke-linecap="butt"/>
<text x="913.50" y="831.60" font-size="10.94" text-anchor="middle" textLength="6.64" lengthAdjust="spacingAndGlyphs" fill="#000000">0</text>
<line x1="965.36" y1="809.00" x2="965.36" y2="815.80" stroke="#1a1a1a" stroke-width="1.75" stroke-linecap="butt"/>
<text x="965.36" y="831.60" font-size="10.94" text-anchor="middle" textLength="19.12" lengthAdjust="spacingAndGlyphs" fill="#000000">200</text>
<line x1="1017.22" y1="809.00" x2="1017.22" y2="815.80" stroke="#1a1a1a" stroke-width="1.75" stroke-linecap="butt"/>
<text x="1017.22" y="831.60" font-size="10.94" text-anchor="middle" textLength="19.12" lengthAdjust="spacingAndGlyphs" fill="#000000">400</text>
<line x1="1069.08" y1="809.00" x2="1069.08" y2="815.80" stroke="#1a1a1a" stroke-width="1.75" stroke-linecap="butt"/>
<text x="1069.08" y="831.60" font-size="10.94" text-anchor="middle" textLength="19.12" lengthAdjust="spacingAndGlyphs" fill="#000000">600</text>
<line x1="1120.94" y1="809.00" x2="1120.94" y2="815.80" stroke="#1a1a1a" stroke-width="1.75" stroke-linecap="butt"/>
<text x="1120.94" y="831.60" font-size="10.94" text-anchor="middle" textLength="19.12" lengthAdjust="spacingAndGlyphs" fill="#000000">800</text>
<line x1="1172.80" y1="809.00" x2="1172.80" y2="815.80" stroke="#1a1a1a" stroke-width="1.75" stroke-linecap="butt"/>
<text x="1172.80" y="831.60" font-size="10.94" text-anchor="middle" textLength="25.50" lengthAdjust="spacingAndGlyphs" fill="#000000">1000</text>
<line x1="904.20" y1="786.90" x2="911.00" y2="786.90" stroke="#1a1a1a" stroke-width="1.75" stroke-linecap="butt"/>
<text x="895.80" y="790.80" font-size="10.94" text-anchor="end" textLength="19.12" lengthAdjust="spacingAndGlyphs" fill="#000000">220</text>
<line x1="904.20" y1="760.90" x2="911.00" y2="760.90" stroke="#1a1a1a" stroke-width="1.75" stroke-linecap="butt"/>
<text x="895.80" y="764.80" font-size="10.94" text-anchor="end" textLength="19.12" lengthAdjust="spacingAndGlyphs" fill="#000000">230</text>
<line x1="904.20" y1="734.90" x2="911.00" y2="734.90" stroke="#1a1a1a" stroke-width="1.75" stroke-linecap="butt"/>
<text x="895.80" y="738.80" font-size="10.94" text-anchor="end" textLength="19.12" lengthAdjust="spacingAndGlyphs" fill="#000000">240</text>
<line x1="904.20" y1="708.90" x2="911.00" y2="708.90" stroke="#1a1a1a" stroke-width="1.75" stroke-linecap="butt"/>
<text x="895.80" y="712.80" font-size="10.94" text-anchor="end" textLength="19.12" lengthAdjust="spacingAndGlyphs" fill="#000000">250</text>
<text x="866.00" y="750.30" font-size="10.94" text-anchor="middle" textLength="34.88" lengthAdjust="spacingAndGlyphs" fill="#000000" transform="rotate(-90 866.00 750.30)">counts</text>
<text x="1194.00" y="749.40" font-size="10.94" text-anchor="middle" textLength="38.77" lengthAdjust="spacingAndGlyphs" fill="#000000" transform="rotate(90 1194.00 749.40)">cut in y</text>
<rect x="1109" y="691.6" width="73.1" height="16.3" rx="2" ry="2" fill="#ffffff" fill-opacity="0.8" stroke="#cccccc" stroke-width="1"/>
<line x1="1111.20" y1="699.90" x2="1133.80" y2="699.90" stroke="#0000ff" stroke-width="1.75" stroke-linecap="butt"/>
<text x="1136.80" y="702.90" font-size="10.61" text-anchor="start" textLength="40.24" lengthAdjust="spacingAndGlyphs" fill="#000000">x=1024</text>
<text x="1048.00" y="849.70" font-size="10.94" text-anchor="middle" textLength="6.38" lengthAdjust="spacingAndGlyphs" fill="#000000">Y</text>
<rect x="1" y="849" width="1243" height="20" fill="#ebebeb"/>
<text x="6.30" y="863.60" font-size="10.94" text-anchor="start" textLength="173.17" lengthAdjust="spacingAndGlyphs" fill="#000000">powered by QC: www.eso.org/HC</text>
<text x="1239.30" y="863.30" font-size="10.94" text-anchor="end" textLength="303.30" lengthAdjust="spacingAndGlyphs" fill="#000000">created by qc_rawdisp.py v1.2.3 on 2026-02-22T11:22:48</text>
</svg>
<script>
(function(){
var c=document.getElementById('img');var ctx=c.getContext('2d');
var W=570,H=288;var im=ctx.createImageData(W,H);var d=im.data;
var s=987654321>>>0;
function rnd(){s^=s<<13;s>>>=0;s^=s>>>17;s^=s<<5;s>>>=0;return (s>>>0)/4294967296;}
function hot(t){if(t<0)t=0;if(t>1)t=1;var r=Math.min(1,0.0416+t/0.365079*0.9584);var g=t<0.365079?0:Math.min(1,(t-0.365079)/0.380953);var b=t<0.746032?0:(t-0.746032)/0.253968;return [Math.round(r*255),Math.round(g*255),Math.round(b*255)];}
var lut={};for(var v=200;v<=270;v++){lut[v]=hot((v-231.1)/7.8);}
for(var i=0;i<W*H;i++){var u=rnd()||1e-9,w=rnd();var g=Math.sqrt(-2*Math.log(u))*Math.cos(6.283185307*w);
var v=Math.round(235.5+3.95*g);if(v<200)v=200;if(v>270)v=270;var col=lut[v];var o=i*4;d[o]=col[0];d[o+1]=col[1];d[o+2]=col[2];d[o+3]=255;}
ctx.putImageData(im,0,0);
})();
</script>
</body></html>
